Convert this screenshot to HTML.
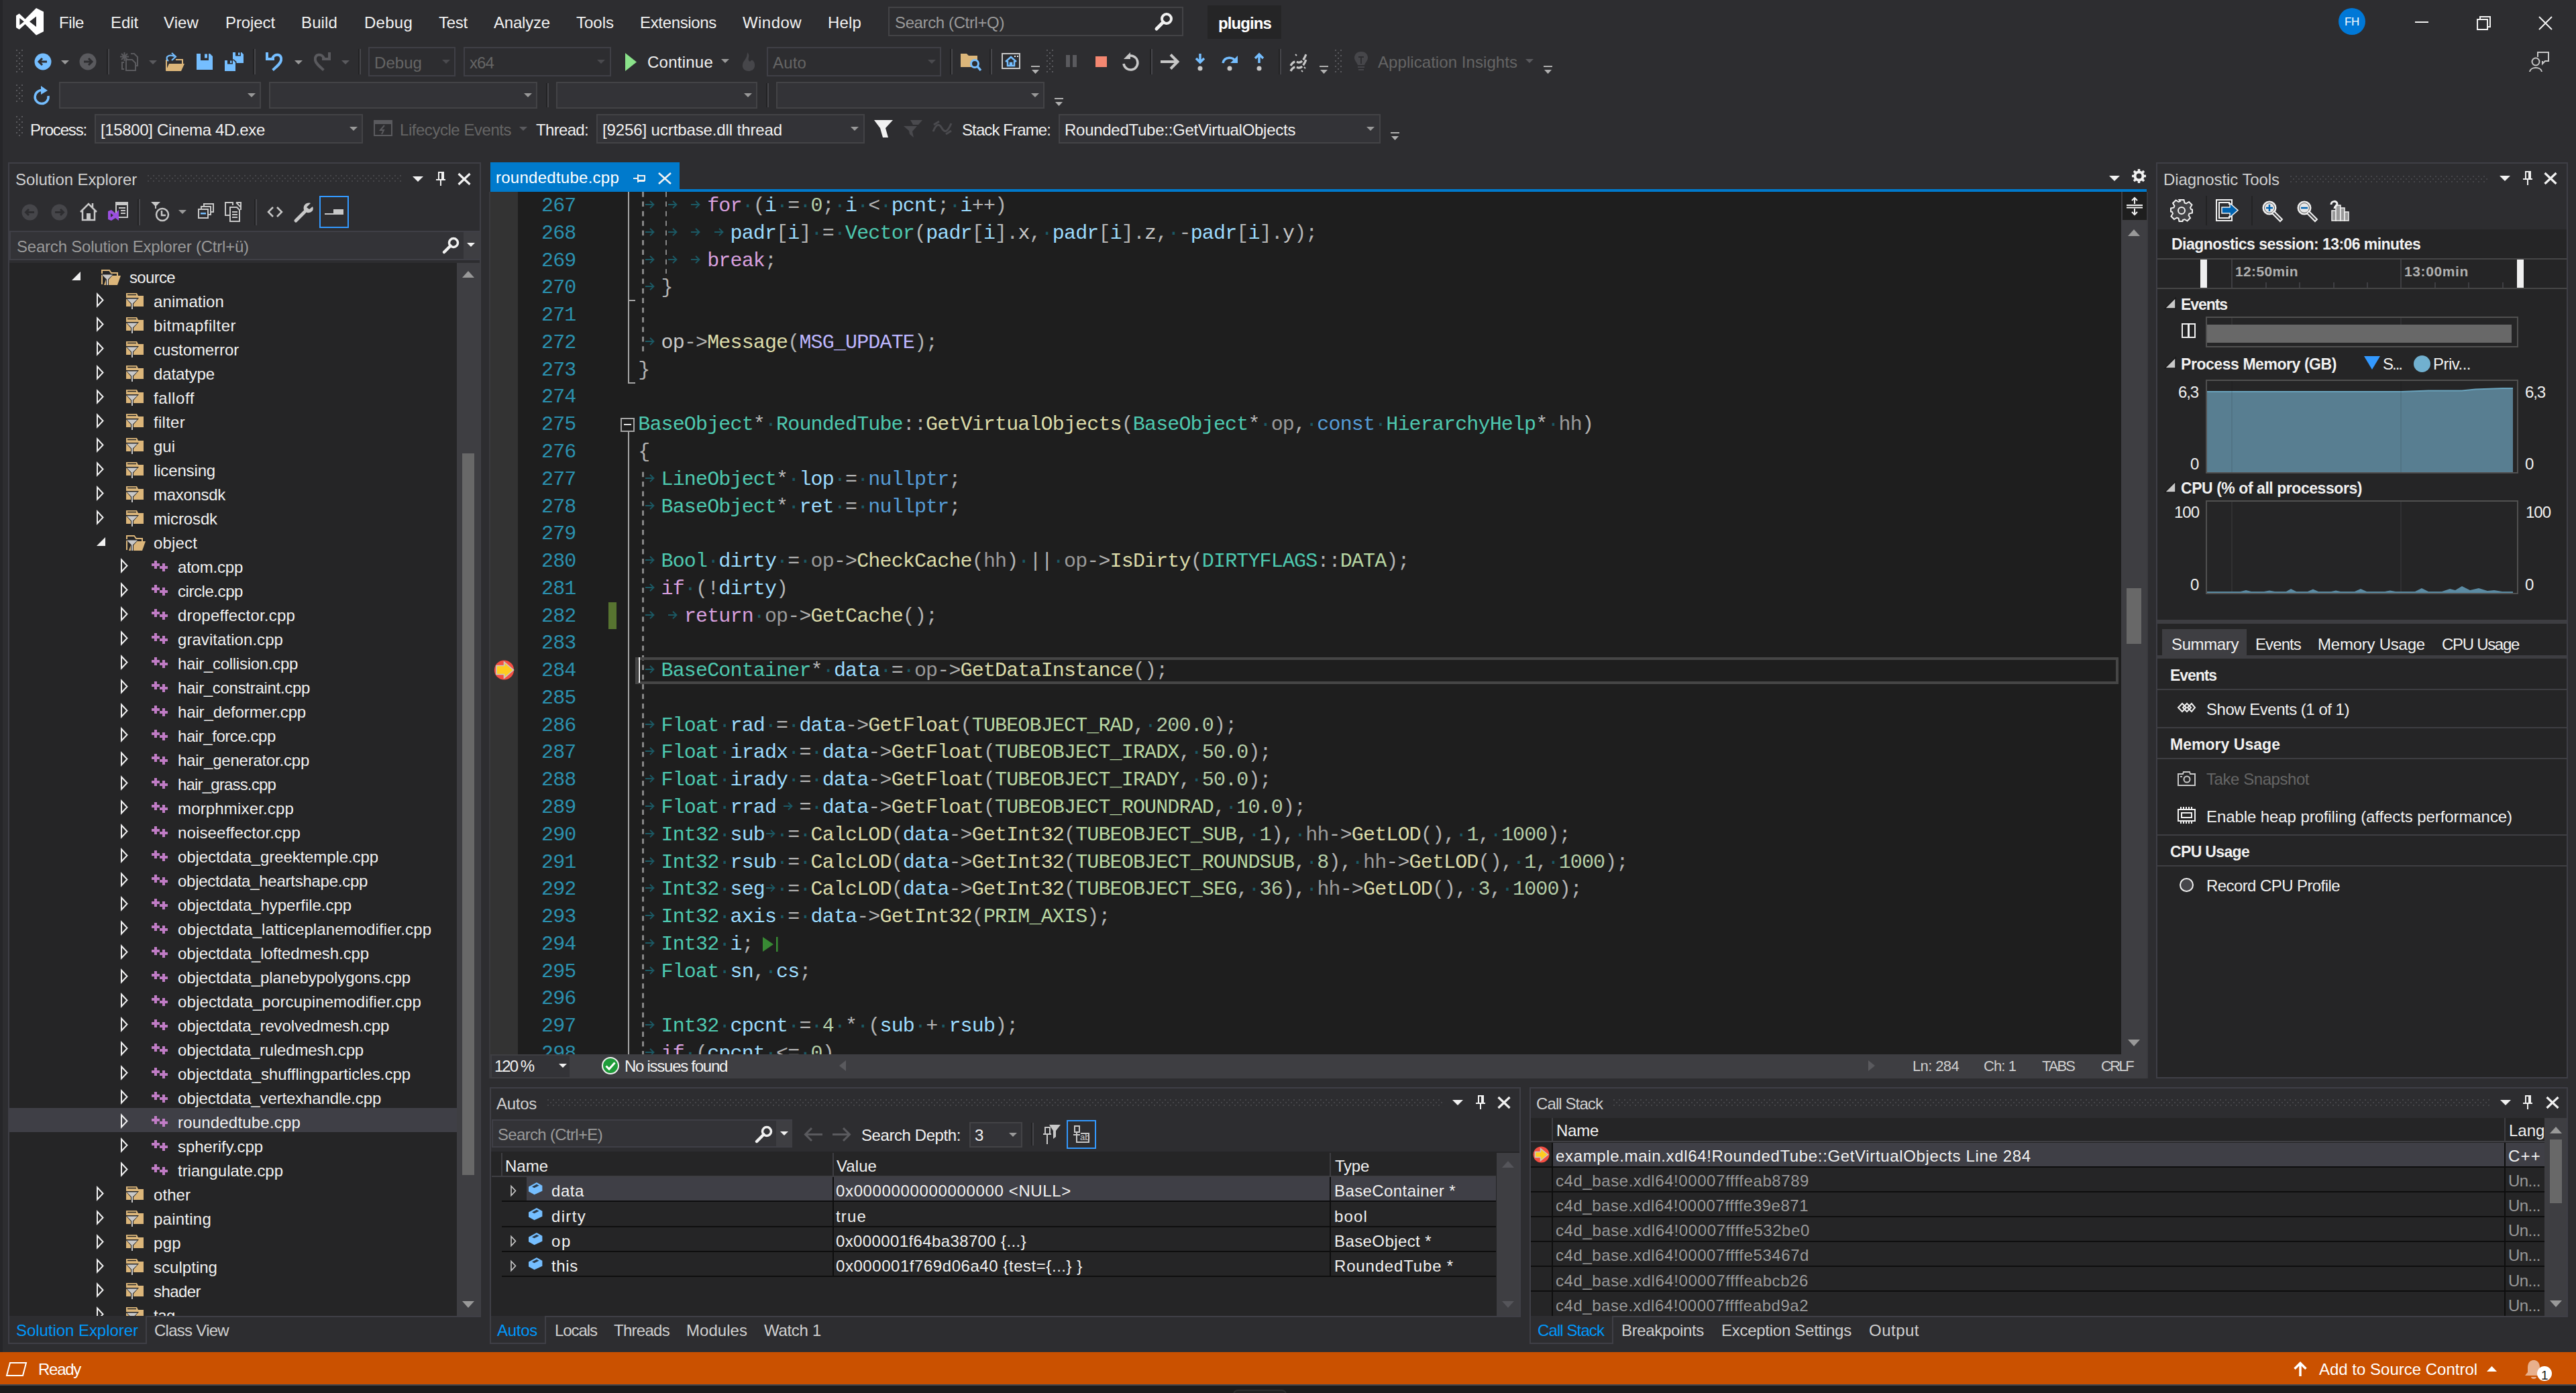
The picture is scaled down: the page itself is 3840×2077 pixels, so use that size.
<!DOCTYPE html><html><head><meta charset="utf-8"><title>VS</title><style>html,body{margin:0;padding:0}body{width:3840px;height:2077px;background:#2d2d30;position:relative;overflow:hidden;font-family:'Liberation Sans',sans-serif;font-size:24px;line-height:1;color:#f1f1f1}
body>*,.a{position:absolute;box-sizing:content-box}span{white-space:pre}svg{overflow:visible}
.c{font-family:'Liberation Mono',monospace;font-size:30px;letter-spacing:-0.85px;color:#c8c8c8}i{font-style:normal}
</style></head><body>
<div style="left:0px;top:0px;width:4px;height:2016px;background:#262629;"></div>
<svg style="left:24px;top:12px;" width="41" height="41" viewBox="0 0 41 41"><path fill="#ffffff" fill-rule="evenodd" d="M30 0L41 5.5V35L30 40.5L13.5 24L4.7 32L0 29V11.3L4.7 8.3L13.5 16.5ZM30 12.5L20 20.2L30 28ZM5.3 15V25.5L11.8 20.2Z"/></svg>
<span style="left:88px;top:22px;letter-spacing:-0.42px;">File</span>
<span style="left:165px;top:22px;letter-spacing:-0.09px;">Edit</span>
<span style="left:244px;top:22px;letter-spacing:0.10px;">View</span>
<span style="left:336px;top:22px;letter-spacing:-0.10px;">Project</span>
<span style="left:449px;top:22px;letter-spacing:0.12px;">Build</span>
<span style="left:543px;top:22px;letter-spacing:0.25px;">Debug</span>
<span style="left:654px;top:22px;letter-spacing:-0.25px;">Test</span>
<span style="left:736px;top:22px;letter-spacing:-0.20px;">Analyze</span>
<span style="left:859px;top:22px;">Tools</span>
<span style="left:954px;top:22px;letter-spacing:-0.34px;">Extensions</span>
<span style="left:1107px;top:22px;letter-spacing:0.44px;">Window</span>
<span style="left:1234px;top:22px;letter-spacing:0.16px;">Help</span>
<div style="left:1324px;top:10px;width:436px;height:40px;background:#2d2d30;border:2px solid #434346;"></div>
<span style="left:1334px;top:22px;color:#999999;letter-spacing:-0.38px;">Search (Ctrl+Q)</span>
<svg style="left:1721px;top:18px;" width="28" height="28" viewBox="0 0 28 28"><circle cx="18" cy="10" r="7" fill="none" stroke="#f1f1f1" stroke-width="4"/><path d="M13 15L3 25" stroke="#f1f1f1" stroke-width="5" stroke-linecap="round"/></svg>
<div style="left:1800px;top:8px;width:110px;height:50px;background:#252526;"></div>
<span style="left:1816px;top:23px;font-weight:700;color:#ffffff;letter-spacing:-0.90px;">plugins</span>
<div style="left:3486px;top:12px;width:40px;height:40px;border-radius:20px;background:#0078d7"></div>
<span style="left:3495px;top:24px;font-size:17px;color:#ffffff;letter-spacing:-0.34px;">FH</span>
<div style="left:3600px;top:32px;width:20px;height:2px;background:#f1f1f1;"></div>
<svg style="left:3692px;top:24px;" width="21" height="21" viewBox="0 0 21 21"><path d="M5 5V1H20V16H16" fill="none" stroke="#f1f1f1" stroke-width="2"/><rect x="1" y="5" width="15" height="15" fill="none" stroke="#f1f1f1" stroke-width="2"/></svg>
<svg style="left:3784px;top:24px;" width="21" height="21" viewBox="0 0 21 21"><path d="M1 1L20 20M20 1L1 20" stroke="#f1f1f1" stroke-width="2"/></svg>
<svg style="left:3770px;top:77px;" width="30" height="30" viewBox="0 0 30 30"><circle cx="10" cy="15" r="5.5" fill="none" stroke="#c8c8c8" stroke-width="2"/><path d="M1 30C2 22 18 22 19 30" fill="none" stroke="#c8c8c8" stroke-width="2"/><path d="M13 8V1H29V14H24L20 18V14" fill="none" stroke="#c8c8c8" stroke-width="2"/></svg>
<svg style="left:24px;top:74px;" width="10" height="36" viewBox="0 0 10 36"><g fill="#5a5a5e"><rect x="0" y="0" width="2" height="2"/><rect x="8" y="0" width="2" height="2"/><rect x="4" y="4" width="2" height="2"/><rect x="0" y="8" width="2" height="2"/><rect x="8" y="8" width="2" height="2"/><rect x="4" y="12" width="2" height="2"/><rect x="0" y="16" width="2" height="2"/><rect x="8" y="16" width="2" height="2"/><rect x="4" y="20" width="2" height="2"/><rect x="0" y="24" width="2" height="2"/><rect x="8" y="24" width="2" height="2"/><rect x="4" y="28" width="2" height="2"/><rect x="0" y="32" width="2" height="2"/><rect x="8" y="32" width="2" height="2"/></g></svg>
<svg style="left:51px;top:79px;" width="26" height="26" viewBox="0 0 26 26"><circle cx="13" cy="13" r="12.5" fill="#75beff"/><path d="M19 13H8M12 8L7 13L12 18" stroke="#2d2d30" stroke-width="3" fill="none"/></svg>
<svg style="left:91px;top:90px;" width="12" height="6" viewBox="0 0 12 6"><path d="M0 0H12L6.0 6Z" fill="#999999"/></svg>
<svg style="left:118px;top:79px;" width="26" height="26" viewBox="0 0 26 26"><circle cx="13" cy="13" r="12.5" fill="#5a5a5e"/><path d="M7 13H18M14 8L19 13L14 18" stroke="#2d2d30" stroke-width="3" fill="none"/></svg>
<div style="left:159px;top:73px;width:2px;height:38px;background:#222224;"></div>
<div style="left:161px;top:73px;width:2px;height:38px;background:#46464a;"></div>
<svg style="left:179px;top:78px;" width="27" height="28" viewBox="0 0 27 28"><path d="M6.5 0V13M0 6.5H13M2 2L11 11M11 2L2 11" stroke="#5a5a5e" stroke-width="2"/><path d="M16 2H21L26 7V20H24" fill="none" stroke="#5a5a5e" stroke-width="2"/><path d="M9 11H18L23 16V27H9Z" fill="#2d2d30" stroke="#5a5a5e" stroke-width="2"/><path d="M6 15H3V25H6" fill="none" stroke="#5a5a5e" stroke-width="2"/></svg>
<svg style="left:222px;top:90px;" width="12" height="6" viewBox="0 0 12 6"><path d="M0 0H12L6.0 6Z" fill="#5a5a5e"/></svg>
<svg style="left:246px;top:78px;" width="30" height="29" viewBox="0 0 30 29"><path d="M2 27V11M16 11H26V17" fill="none" stroke="#dcb67a" stroke-width="2"/><path d="M1 28L6 17H29L24 28Z" fill="#dcb67a"/><path d="M5 13C-1 8 5 2 14 6M10 1L16 6.5L10 12" fill="none" stroke="#75beff" stroke-width="2.2"/></svg>
<svg style="left:293px;top:80px;" width="24" height="24" viewBox="0 0 24 24"><path d="M0 0H20L24 4V24H0Z" fill="#75beff"/><rect x="6" y="0" width="12" height="10" fill="#2d2d30"/><rect x="12" y="0.5" width="4" height="6" fill="#75beff"/></svg>
<svg style="left:335px;top:78px;" width="28" height="28" viewBox="0 0 28 28"><path d="M12 0H25L28 3V16H12Z" fill="#75beff"/><rect x="16" y="0" width="8" height="5.5" fill="#2d2d30"/><rect x="20" y="0.5" width="2.5" height="3.5" fill="#75beff"/><path d="M-1.5 10.5H13.5L17.5 14V29.5H-1.5Z" fill="#2d2d30"/><path d="M0 12H13L16 15V28H0Z" fill="#75beff"/><rect x="4" y="12" width="8" height="5.5" fill="#2d2d30"/><rect x="8" y="12.5" width="2.5" height="3.5" fill="#75beff"/></svg>
<div style="left:377px;top:73px;width:2px;height:38px;background:#222224;"></div>
<div style="left:379px;top:73px;width:2px;height:38px;background:#46464a;"></div>
<svg style="left:396px;top:78px;" width="27" height="29" viewBox="0 0 27 29"><path d="M2 0V10H13" fill="none" stroke="#75beff" stroke-width="4"/><path d="M10 9C13 1 25 2 23 12C22 17 17 21 10.5 26.5" fill="none" stroke="#75beff" stroke-width="4"/></svg>
<svg style="left:439px;top:90px;" width="12" height="6" viewBox="0 0 12 6"><path d="M0 0H12L6.0 6Z" fill="#999999"/></svg>
<svg style="left:466px;top:78px;" width="27" height="29" viewBox="0 0 27 29"><path d="M25 0V10H14" fill="none" stroke="#5a5a5e" stroke-width="4"/><path d="M17 9C14 1 2 2 4 12C5 17 10 21 16.5 26.5" fill="none" stroke="#5a5a5e" stroke-width="4"/></svg>
<svg style="left:509px;top:90px;" width="12" height="6" viewBox="0 0 12 6"><path d="M0 0H12L6.0 6Z" fill="#5a5a5e"/></svg>
<div style="left:534px;top:73px;width:2px;height:38px;background:#222224;"></div>
<div style="left:536px;top:73px;width:2px;height:38px;background:#46464a;"></div>
<div style="left:549px;top:70px;width:126px;height:40px;background:#2d2d30;border:2px solid #3f3f46;"></div>
<svg style="left:659px;top:89px;" width="12" height="6" viewBox="0 0 12 6"><path d="M0 0H12L6.0 6Z" fill="#4a4a4e"/></svg>
<span style="left:558px;top:82px;color:#656565;letter-spacing:0.05px;">Debug</span>
<div style="left:691px;top:70px;width:216px;height:40px;background:#2d2d30;border:2px solid #3f3f46;"></div>
<svg style="left:890px;top:89px;" width="12" height="6" viewBox="0 0 12 6"><path d="M0 0H12L6.0 6Z" fill="#4a4a4e"/></svg>
<span style="left:700px;top:82px;color:#656565;letter-spacing:-0.90px;">x64</span>
<svg style="left:932px;top:79px;" width="17" height="27" viewBox="0 0 17 27"><path d="M0 0L17 13.5L0 27Z" fill="#8ae28a"/></svg>
<span style="left:965px;top:81px;letter-spacing:0.24px;">Continue</span>
<svg style="left:1075px;top:88px;" width="12" height="6" viewBox="0 0 12 6"><path d="M0 0H12L6.0 6Z" fill="#999999"/></svg>
<svg style="left:1106px;top:78px;" width="20" height="28" viewBox="0 0 20 28"><path d="M8 0C14 6 6 10 12 14C16 8 20 16 19 21C18 26 14 28 10 28C4 28 0 24 1 18C2 12 8 10 8 0Z" fill="#46464a"/></svg>
<div style="left:1143px;top:70px;width:256px;height:40px;background:#2d2d30;border:2px solid #3f3f46;"></div>
<svg style="left:1383px;top:89px;" width="12" height="6" viewBox="0 0 12 6"><path d="M0 0H12L6.0 6Z" fill="#4a4a4e"/></svg>
<span style="left:1152px;top:82px;color:#656565;letter-spacing:0.16px;">Auto</span>
<div style="left:1416px;top:73px;width:2px;height:38px;background:#222224;"></div>
<div style="left:1418px;top:73px;width:2px;height:38px;background:#46464a;"></div>
<svg style="left:1432px;top:78px;" width="31" height="28" viewBox="0 0 31 28"><path d="M0 22V2H9L12 5H25V22Z" fill="#dcb67a"/><circle cx="21" cy="17" r="5.5" fill="#2d2d30" stroke="#75beff" stroke-width="3"/><path d="M25 21L30 27" stroke="#75beff" stroke-width="3.5"/></svg>
<div style="left:1475px;top:73px;width:2px;height:38px;background:#222224;"></div>
<div style="left:1477px;top:73px;width:2px;height:38px;background:#46464a;"></div>
<svg style="left:1493px;top:79px;" width="28" height="26" viewBox="0 0 28 26"><rect x="1" y="1" width="26" height="22" fill="none" stroke="#c8c8c8" stroke-width="2"/><path d="M6 13L14 6L22 13M9 12V19H19V12M13 19V15H15V19" fill="none" stroke="#75beff" stroke-width="2.5"/><rect x="19" y="4" width="2" height="2" fill="#f1f1f1"/><rect x="23" y="4" width="2" height="2" fill="#f1f1f1"/></svg>
<svg style="left:1537px;top:98px;" width="13" height="13" viewBox="0 0 13 13"><path d="M0 0H13V2H0ZM1 6H12L6.5 12Z" fill="#b0b0b0"/></svg>
<svg style="left:1560px;top:74px;" width="10" height="36" viewBox="0 0 10 36"><g fill="#5a5a5e"><rect x="0" y="0" width="2" height="2"/><rect x="8" y="0" width="2" height="2"/><rect x="4" y="4" width="2" height="2"/><rect x="0" y="8" width="2" height="2"/><rect x="8" y="8" width="2" height="2"/><rect x="4" y="12" width="2" height="2"/><rect x="0" y="16" width="2" height="2"/><rect x="8" y="16" width="2" height="2"/><rect x="4" y="20" width="2" height="2"/><rect x="0" y="24" width="2" height="2"/><rect x="8" y="24" width="2" height="2"/><rect x="4" y="28" width="2" height="2"/><rect x="0" y="32" width="2" height="2"/><rect x="8" y="32" width="2" height="2"/></g></svg>
<div style="left:1589px;top:82px;width:6px;height:18px;background:#5a5a5e;"></div>
<div style="left:1599px;top:82px;width:6px;height:18px;background:#5a5a5e;"></div>
<div style="left:1633px;top:84px;width:17px;height:16px;background:#f48771;"></div>
<svg style="left:1672px;top:78px;" width="26" height="28" viewBox="0 0 26 28"><path d="M9 6A10.5 10.5 0 1 1 3 17" fill="none" stroke="#c8c8c8" stroke-width="3.5"/><path d="M13 0V10H3Z" fill="#c8c8c8"/></svg>
<div style="left:1714px;top:73px;width:2px;height:38px;background:#222224;"></div>
<div style="left:1716px;top:73px;width:2px;height:38px;background:#46464a;"></div>
<svg style="left:1730px;top:80px;" width="29" height="24" viewBox="0 0 29 24"><path d="M0 12H25M15 1.5L25.5 12L15 22.5" fill="none" stroke="#c8c8c8" stroke-width="4"/></svg>
<svg style="left:1782px;top:80px;" width="14" height="26" viewBox="0 0 14 26"><path d="M7 0V12M1 7L7 13L13 7" fill="none" stroke="#75beff" stroke-width="3.5"/><circle cx="7" cy="22" r="3.5" fill="#c8c8c8"/></svg>
<svg style="left:1821px;top:80px;" width="25" height="26" viewBox="0 0 25 26"><path d="M2 14C4 4 18 4 21 12" fill="none" stroke="#75beff" stroke-width="3.5"/><path d="M24 3V14H13Z" fill="#75beff"/><circle cx="12" cy="22" r="3.5" fill="#c8c8c8"/></svg>
<svg style="left:1870px;top:80px;" width="14" height="26" viewBox="0 0 14 26"><path d="M7 14V2M1 7L7 1L13 7" fill="none" stroke="#75beff" stroke-width="3.5"/><circle cx="7" cy="22" r="3.5" fill="#c8c8c8"/></svg>
<div style="left:1906px;top:73px;width:2px;height:38px;background:#222224;"></div>
<div style="left:1908px;top:73px;width:2px;height:38px;background:#46464a;"></div>
<svg style="left:1922px;top:78px;" width="28" height="28" viewBox="0 0 28 28"><path d="M2 20C6 12 10 14 13 15C17 16 21 13 25 3M2 28C6 20 10 22 13 23C17 24 21 21 25 11" fill="none" stroke="#c8c8c8" stroke-width="3.2" stroke-dasharray="9 2.5"/><path d="M9 3L11 5M5 14L7 16M22 22L24 24M18 27L20 29" stroke="#c8c8c8" stroke-width="2"/></svg>
<svg style="left:1967px;top:98px;" width="13" height="13" viewBox="0 0 13 13"><path d="M0 0H13V2H0ZM1 6H12L6.5 12Z" fill="#b0b0b0"/></svg>
<svg style="left:1990px;top:74px;" width="10" height="36" viewBox="0 0 10 36"><g fill="#5a5a5e"><rect x="0" y="0" width="2" height="2"/><rect x="8" y="0" width="2" height="2"/><rect x="4" y="4" width="2" height="2"/><rect x="0" y="8" width="2" height="2"/><rect x="8" y="8" width="2" height="2"/><rect x="4" y="12" width="2" height="2"/><rect x="0" y="16" width="2" height="2"/><rect x="8" y="16" width="2" height="2"/><rect x="4" y="20" width="2" height="2"/><rect x="0" y="24" width="2" height="2"/><rect x="8" y="24" width="2" height="2"/><rect x="4" y="28" width="2" height="2"/><rect x="0" y="32" width="2" height="2"/><rect x="8" y="32" width="2" height="2"/></g></svg>
<svg style="left:2019px;top:77px;" width="20" height="30" viewBox="0 0 20 30"><path d="M10 0C3 0 0 5 0 9C0 13 3 15 5 20H15C17 15 20 13 20 9C20 5 17 0 10 0Z" fill="#46464a"/><rect x="5" y="22" width="10" height="2" fill="#46464a"/><rect x="6" y="26" width="8" height="2" fill="#46464a"/><path d="M6 8H14M10 8V18" stroke="#2d2d30" stroke-width="2"/></svg>
<span style="left:2054px;top:81px;color:#656565;letter-spacing:0.06px;">Application Insights</span>
<svg style="left:2274px;top:88px;" width="12" height="6" viewBox="0 0 12 6"><path d="M0 0H12L6.0 6Z" fill="#5a5a5e"/></svg>
<svg style="left:2301px;top:98px;" width="13" height="13" viewBox="0 0 13 13"><path d="M0 0H13V2H0ZM1 6H12L6.5 12Z" fill="#b0b0b0"/></svg>
<svg style="left:24px;top:126px;" width="10" height="30" viewBox="0 0 10 30"><g fill="#5a5a5e"><rect x="0" y="0" width="2" height="2"/><rect x="8" y="0" width="2" height="2"/><rect x="4" y="4" width="2" height="2"/><rect x="0" y="8" width="2" height="2"/><rect x="8" y="8" width="2" height="2"/><rect x="4" y="12" width="2" height="2"/><rect x="0" y="16" width="2" height="2"/><rect x="8" y="16" width="2" height="2"/><rect x="4" y="20" width="2" height="2"/><rect x="0" y="24" width="2" height="2"/><rect x="8" y="24" width="2" height="2"/></g></svg>
<svg style="left:48px;top:128px;" width="27" height="28" viewBox="0 0 27 28"><path d="M17 7A10 10 0 1 0 24 15" fill="none" stroke="#75beff" stroke-width="3.5"/><path d="M13 0L23 7L13 13Z" fill="#75beff"/></svg>
<div style="left:88px;top:122px;width:297px;height:36px;background:#333337;border:2px solid #434346;"></div>
<svg style="left:369px;top:139px;" width="12" height="6" viewBox="0 0 12 6"><path d="M0 0H12L6.0 6Z" fill="#999999"/></svg>
<div style="left:401px;top:122px;width:396px;height:36px;background:#333337;border:2px solid #434346;"></div>
<svg style="left:781px;top:139px;" width="12" height="6" viewBox="0 0 12 6"><path d="M0 0H12L6.0 6Z" fill="#999999"/></svg>
<div style="left:814px;top:124px;width:2px;height:36px;background:#222224;"></div>
<div style="left:816px;top:124px;width:2px;height:36px;background:#46464a;"></div>
<div style="left:829px;top:122px;width:296px;height:36px;background:#333337;border:2px solid #434346;"></div>
<svg style="left:1109px;top:139px;" width="12" height="6" viewBox="0 0 12 6"><path d="M0 0H12L6.0 6Z" fill="#999999"/></svg>
<div style="left:1142px;top:124px;width:2px;height:36px;background:#222224;"></div>
<div style="left:1144px;top:124px;width:2px;height:36px;background:#46464a;"></div>
<div style="left:1157px;top:122px;width:396px;height:36px;background:#333337;border:2px solid #434346;"></div>
<svg style="left:1537px;top:139px;" width="12" height="6" viewBox="0 0 12 6"><path d="M0 0H12L6.0 6Z" fill="#999999"/></svg>
<svg style="left:1572px;top:146px;" width="13" height="13" viewBox="0 0 13 13"><path d="M0 0H13V2H0ZM1 6H12L6.5 12Z" fill="#b0b0b0"/></svg>
<svg style="left:24px;top:173px;" width="10" height="34" viewBox="0 0 10 34"><g fill="#5a5a5e"><rect x="0" y="0" width="2" height="2"/><rect x="8" y="0" width="2" height="2"/><rect x="4" y="4" width="2" height="2"/><rect x="0" y="8" width="2" height="2"/><rect x="8" y="8" width="2" height="2"/><rect x="4" y="12" width="2" height="2"/><rect x="0" y="16" width="2" height="2"/><rect x="8" y="16" width="2" height="2"/><rect x="4" y="20" width="2" height="2"/><rect x="0" y="24" width="2" height="2"/><rect x="8" y="24" width="2" height="2"/><rect x="4" y="28" width="2" height="2"/></g></svg>
<span style="left:45px;top:182px;letter-spacing:-1.17px;">Process:</span>
<div style="left:141px;top:170px;width:396px;height:40px;background:#333337;border:2px solid #434346;"></div>
<svg style="left:521px;top:189px;" width="12" height="6" viewBox="0 0 12 6"><path d="M0 0H12L6.0 6Z" fill="#999999"/></svg>
<span style="left:150px;top:182px;letter-spacing:-0.34px;">[15800] Cinema 4D.exe</span>
<svg style="left:557px;top:179px;" width="28" height="24" viewBox="0 0 28 24"><rect x="1" y="1" width="26" height="22" fill="none" stroke="#5a5a5e" stroke-width="2"/><rect x="1" y="1" width="26" height="5" fill="#5a5a5e"/><path d="M16 8L10 15H15L12 21" fill="none" stroke="#5a5a5e" stroke-width="2"/></svg>
<span style="left:596px;top:182px;color:#656565;letter-spacing:-0.46px;">Lifecycle Events</span>
<svg style="left:774px;top:189px;" width="12" height="6" viewBox="0 0 12 6"><path d="M0 0H12L6.0 6Z" fill="#5a5a5e"/></svg>
<span style="left:799px;top:182px;letter-spacing:-0.67px;">Thread:</span>
<div style="left:889px;top:170px;width:396px;height:40px;background:#333337;border:2px solid #434346;"></div>
<svg style="left:1268px;top:189px;" width="12" height="6" viewBox="0 0 12 6"><path d="M0 0H12L6.0 6Z" fill="#999999"/></svg>
<span style="left:898px;top:182px;letter-spacing:-0.11px;">[9256] ucrtbase.dll thread</span>
<svg style="left:1303px;top:178px;" width="29" height="28" viewBox="0 0 29 28"><path d="M0 1H28L17 13L21 27L13 27L9 13Z" fill="#f1f1f1"/></svg>
<svg style="left:1347px;top:178px;" width="29" height="28" viewBox="0 0 29 28"><path d="M10 1H28L22 8H14ZM0 10H20L13 18L15 27L9 22L8 17Z" fill="#4a4a4e"/></svg>
<svg style="left:1390px;top:180px;" width="30" height="22" viewBox="0 0 30 22"><path d="M1 16C6 4 10 4 14 11C18 18 22 18 28 4" fill="none" stroke="#4a4a4e" stroke-width="3"/><path d="M2 6L10 1M20 20L28 15" stroke="#4a4a4e" stroke-width="3"/></svg>
<span style="left:1434px;top:182px;letter-spacing:-0.89px;">Stack Frame:</span>
<div style="left:1578px;top:170px;width:476px;height:40px;background:#333337;border:2px solid #434346;"></div>
<svg style="left:2037px;top:189px;" width="12" height="6" viewBox="0 0 12 6"><path d="M0 0H12L6.0 6Z" fill="#999999"/></svg>
<span style="left:1587px;top:182px;letter-spacing:-0.27px;">RoundedTube::GetVirtualObjects</span>
<svg style="left:2073px;top:197px;" width="13" height="13" viewBox="0 0 13 13"><path d="M0 0H13V2H0ZM1 6H12L6.5 12Z" fill="#b0b0b0"/></svg>
<div style="left:12px;top:242px;width:705px;height:1722px;background:#3f3f46;"></div>
<div style="left:14px;top:244px;width:701px;height:100px;background:#2d2d30;"></div>
<span style="left:23px;top:256px;color:#d0d0d0;letter-spacing:-0.10px;">Solution Explorer</span>
<svg style="left:220px;top:261px" width="378" height="10"><defs><pattern id="g220261" width="8" height="8" patternUnits="userSpaceOnUse"><rect x="0" y="0" width="2" height="2" fill="#46464a"/><rect x="4" y="4" width="2" height="2" fill="#46464a"/></pattern></defs><rect width="378" height="10" fill="url(#g220261)"/></svg>
<svg style="left:615px;top:263px;" width="16" height="8" viewBox="0 0 16 8"><path d="M0 0H16L8 8Z" fill="#f1f1f1"/></svg>
<svg style="left:650px;top:256px;" width="14" height="22" viewBox="0 0 14 22"><path d="M3 1H11V12M4 1V12M0 12H14M7 12V21" fill="none" stroke="#f1f1f1" stroke-width="2"/><rect x="8" y="1" width="3" height="11" fill="#f1f1f1"/></svg>
<svg style="left:682px;top:259px;" width="20" height="16" viewBox="0 0 20 16"><path d="M1.5 0L18.5 16M18.5 0L1.5 16" stroke="#f1f1f1" stroke-width="3.2"/></svg>
<svg style="left:32px;top:304px;" width="25" height="25" viewBox="0 0 25 25"><circle cx="12.5" cy="12.5" r="12" fill="#46464a"/><path d="M19 12.5H7M11 8L6.5 12.5L11 17" stroke="#2d2d30" stroke-width="3" fill="none"/></svg>
<svg style="left:76px;top:304px;" width="25" height="25" viewBox="0 0 25 25"><circle cx="12.5" cy="12.5" r="12" fill="#46464a"/><path d="M6 12.5H18M14 8L18.5 12.5L14 17" stroke="#2d2d30" stroke-width="3" fill="none"/></svg>
<svg style="left:118px;top:301px;" width="28" height="29" viewBox="0 0 28 29"><path d="M2 15L14 3L26 15M5 13V27H23V13M20 8V2" fill="none" stroke="#c8c8c8" stroke-width="2.5"/><rect x="11" y="17" width="6" height="10" fill="#c8c8c8"/></svg>
<svg style="left:161px;top:301px;" width="30" height="30" viewBox="0 0 30 30"><rect x="12" y="1" width="17" height="22" fill="none" stroke="#c8c8c8" stroke-width="2"/><rect x="12" y="1" width="17" height="4" fill="#c8c8c8"/><path d="M16 9H26M19 13H26M19 17H26" stroke="#c8c8c8" stroke-width="2"/><path d="M0 14L5 12L11 17L16 12V28L11 24L5 28L0 26Z" fill="#9b4fe0"/><path d="M4 17V23L8 20Z" fill="#2d2d30"/></svg>
<div style="left:205px;top:297px;width:2px;height:39px;background:#222224;"></div>
<div style="left:207px;top:297px;width:2px;height:39px;background:#46464a;"></div>
<svg style="left:225px;top:301px;" width="28" height="30" viewBox="0 0 28 30"><path d="M0 0H14L7 7Z" fill="#c8c8c8"/><rect x="6" y="6" width="2" height="4" fill="#c8c8c8"/><circle cx="17" cy="19" r="9" fill="none" stroke="#c8c8c8" stroke-width="2.5"/><path d="M16 13V20H22" fill="none" stroke="#c8c8c8" stroke-width="2.5"/></svg>
<svg style="left:266px;top:313px;" width="12" height="6" viewBox="0 0 12 6"><path d="M0 0H12L6.0 6Z" fill="#999999"/></svg>
<svg style="left:295px;top:303px;" width="24" height="24" viewBox="0 0 24 24"><path d="M9 5V1H23V13H19M5 9V5H19V17H15" fill="none" stroke="#c8c8c8" stroke-width="2"/><rect x="1" y="9" width="14" height="13" fill="none" stroke="#c8c8c8" stroke-width="2"/><rect x="4" y="14" width="8" height="2.5" fill="#75beff"/></svg>
<svg style="left:335px;top:301px;" width="30" height="30" viewBox="0 0 30 30"><path d="M7 20H1V1H12V5M24 12V1H17M17 1L24 8" fill="none" stroke="#c8c8c8" stroke-width="2"/><path d="M8 8H18L22 12V29H8Z" fill="none" stroke="#c8c8c8" stroke-width="2"/><path d="M11 15H19M11 19H19M11 23H19" stroke="#c8c8c8" stroke-width="2"/></svg>
<div style="left:379px;top:297px;width:2px;height:39px;background:#222224;"></div>
<div style="left:381px;top:297px;width:2px;height:39px;background:#46464a;"></div>
<svg style="left:398px;top:308px;" width="24" height="16" viewBox="0 0 24 16"><path d="M9 1L2 8L9 15M15 1L22 8L15 15" fill="none" stroke="#c8c8c8" stroke-width="2.5"/></svg>
<svg style="left:439px;top:301px;" width="30" height="30" viewBox="0 0 30 30"><path d="M2 28L15 15" stroke="#c8c8c8" stroke-width="5" stroke-linecap="round"/><path d="M24 2C18 0 12 5 14 12C16 17 23 18 27 13C28 11 28 9 27 7L22 11L18 8L23 3Z" fill="#c8c8c8"/></svg>
<div style="left:476px;top:292px;width:40px;height:44px;background:#2d2d30;border:2px solid #3399ff;"></div>
<svg style="left:484px;top:312px;" width="28" height="10" viewBox="0 0 28 10"><rect x="13" y="0" width="15" height="7" fill="#c8c8c8"/><rect x="0" y="6" width="28" height="2" fill="#c8c8c8"/></svg>
<div style="left:14px;top:344px;width:702px;height:44px;background:#3f3f46;"></div>
<div style="left:16px;top:346px;width:675px;height:40px;background:#333337;"></div>
<div style="left:691px;top:346px;width:24px;height:40px;background:#3e3e42;"></div>
<span style="left:25px;top:356px;color:#999999;letter-spacing:-0.21px;">Search Solution Explorer (Ctrl+ü)</span>
<svg style="left:659px;top:353px;" width="26" height="26" viewBox="0 0 26 26"><circle cx="17" cy="9" r="6.5" fill="none" stroke="#f1f1f1" stroke-width="3.5"/><path d="M12.5 13.5L3 23" stroke="#f1f1f1" stroke-width="4.5" stroke-linecap="round"/></svg>
<svg style="left:696px;top:362px;" width="12" height="6" viewBox="0 0 12 6"><path d="M0 0H12L6.0 6Z" fill="#f1f1f1"/></svg>
<div style="left:14px;top:388px;width:701px;height:4px;background:#2d2d30;"></div>
<div style="left:14px;top:392px;width:667px;height:1570px;background:#252526;"></div>
<div style="left:681px;top:392px;width:35px;height:1570px;background:#3e3e42;"></div>
<div style="left:689px;top:676px;width:18px;height:1076px;background:#686868;"></div>
<svg style="left:689px;top:404px;" width="18" height="10" viewBox="0 0 18 10"><path d="M0 10H18L9 0Z" fill="#999999"/></svg>
<svg style="left:689px;top:1940px;" width="18" height="10" viewBox="0 0 18 10"><path d="M0 0H18L9 10Z" fill="#999999"/></svg>
<div style="left:14px;top:392px;width:667px;height:1570px;overflow:hidden">
<svg class="a" style="left:93px;top:13px;" width="14" height="14" viewBox="0 0 14 14"><path d="M13 0V13H0Z" fill="#f1f1f1"/></svg>
<svg class="a" style="left:137px;top:8px;" width="30" height="26" viewBox="0 0 30 26"><path d="M1 24V3H12L15 7H24V11" fill="none" stroke="#dcb67a" stroke-width="2"/><path d="M4 25L9 11H29L24 25Z" fill="#dcb67a"/><path d="M-1 8H19L11 17V26H7V17Z" fill="#252526"/><path d="M1 9.5H17L10 16.5V25H8V16.5Z" fill="#c8c8c8"/></svg>
<span class="a" style="left:179px;top:10px;letter-spacing:-0.67px;">source</span>
<svg class="a" style="left:130px;top:45px;" width="11" height="21" viewBox="0 0 11 21"><path d="M1 1.5L9.5 10.5L1 19.5Z" fill="none" stroke="#f1f1f1" stroke-width="2"/></svg>
<svg class="a" style="left:174px;top:44px;" width="30" height="26" viewBox="0 0 30 26"><path d="M0 21V1H16L18 5H26V21Z" fill="#dcb67a"/><path d="M2 3.5H15" stroke="#252526" stroke-width="1.5"/><path d="M-1 8H19L11 17V26H7V17Z" fill="#252526"/><path d="M1 9.5H17L10 16.5V25H8V16.5Z" fill="#c8c8c8"/></svg>
<span class="a" style="left:215px;top:46px;letter-spacing:0.10px;">animation</span>
<svg class="a" style="left:130px;top:81px;" width="11" height="21" viewBox="0 0 11 21"><path d="M1 1.5L9.5 10.5L1 19.5Z" fill="none" stroke="#f1f1f1" stroke-width="2"/></svg>
<svg class="a" style="left:174px;top:80px;" width="30" height="26" viewBox="0 0 30 26"><path d="M0 21V1H16L18 5H26V21Z" fill="#dcb67a"/><path d="M2 3.5H15" stroke="#252526" stroke-width="1.5"/><path d="M-1 8H19L11 17V26H7V17Z" fill="#252526"/><path d="M1 9.5H17L10 16.5V25H8V16.5Z" fill="#c8c8c8"/></svg>
<span class="a" style="left:215px;top:82px;letter-spacing:0.47px;">bitmapfilter</span>
<svg class="a" style="left:130px;top:117px;" width="11" height="21" viewBox="0 0 11 21"><path d="M1 1.5L9.5 10.5L1 19.5Z" fill="none" stroke="#f1f1f1" stroke-width="2"/></svg>
<svg class="a" style="left:174px;top:116px;" width="30" height="26" viewBox="0 0 30 26"><path d="M0 21V1H16L18 5H26V21Z" fill="#dcb67a"/><path d="M2 3.5H15" stroke="#252526" stroke-width="1.5"/><path d="M-1 8H19L11 17V26H7V17Z" fill="#252526"/><path d="M1 9.5H17L10 16.5V25H8V16.5Z" fill="#c8c8c8"/></svg>
<span class="a" style="left:215px;top:118px;letter-spacing:-0.09px;">customerror</span>
<svg class="a" style="left:130px;top:153px;" width="11" height="21" viewBox="0 0 11 21"><path d="M1 1.5L9.5 10.5L1 19.5Z" fill="none" stroke="#f1f1f1" stroke-width="2"/></svg>
<svg class="a" style="left:174px;top:152px;" width="30" height="26" viewBox="0 0 30 26"><path d="M0 21V1H16L18 5H26V21Z" fill="#dcb67a"/><path d="M2 3.5H15" stroke="#252526" stroke-width="1.5"/><path d="M-1 8H19L11 17V26H7V17Z" fill="#252526"/><path d="M1 9.5H17L10 16.5V25H8V16.5Z" fill="#c8c8c8"/></svg>
<span class="a" style="left:215px;top:154px;letter-spacing:-0.13px;">datatype</span>
<svg class="a" style="left:130px;top:189px;" width="11" height="21" viewBox="0 0 11 21"><path d="M1 1.5L9.5 10.5L1 19.5Z" fill="none" stroke="#f1f1f1" stroke-width="2"/></svg>
<svg class="a" style="left:174px;top:188px;" width="30" height="26" viewBox="0 0 30 26"><path d="M0 21V1H16L18 5H26V21Z" fill="#dcb67a"/><path d="M2 3.5H15" stroke="#252526" stroke-width="1.5"/><path d="M-1 8H19L11 17V26H7V17Z" fill="#252526"/><path d="M1 9.5H17L10 16.5V25H8V16.5Z" fill="#c8c8c8"/></svg>
<span class="a" style="left:215px;top:190px;letter-spacing:0.58px;">falloff</span>
<svg class="a" style="left:130px;top:225px;" width="11" height="21" viewBox="0 0 11 21"><path d="M1 1.5L9.5 10.5L1 19.5Z" fill="none" stroke="#f1f1f1" stroke-width="2"/></svg>
<svg class="a" style="left:174px;top:224px;" width="30" height="26" viewBox="0 0 30 26"><path d="M0 21V1H16L18 5H26V21Z" fill="#dcb67a"/><path d="M2 3.5H15" stroke="#252526" stroke-width="1.5"/><path d="M-1 8H19L11 17V26H7V17Z" fill="#252526"/><path d="M1 9.5H17L10 16.5V25H8V16.5Z" fill="#c8c8c8"/></svg>
<span class="a" style="left:215px;top:226px;letter-spacing:0.28px;">filter</span>
<svg class="a" style="left:130px;top:261px;" width="11" height="21" viewBox="0 0 11 21"><path d="M1 1.5L9.5 10.5L1 19.5Z" fill="none" stroke="#f1f1f1" stroke-width="2"/></svg>
<svg class="a" style="left:174px;top:260px;" width="30" height="26" viewBox="0 0 30 26"><path d="M0 21V1H16L18 5H26V21Z" fill="#dcb67a"/><path d="M2 3.5H15" stroke="#252526" stroke-width="1.5"/><path d="M-1 8H19L11 17V26H7V17Z" fill="#252526"/><path d="M1 9.5H17L10 16.5V25H8V16.5Z" fill="#c8c8c8"/></svg>
<span class="a" style="left:215px;top:262px;">gui</span>
<svg class="a" style="left:130px;top:297px;" width="11" height="21" viewBox="0 0 11 21"><path d="M1 1.5L9.5 10.5L1 19.5Z" fill="none" stroke="#f1f1f1" stroke-width="2"/></svg>
<svg class="a" style="left:174px;top:296px;" width="30" height="26" viewBox="0 0 30 26"><path d="M0 21V1H16L18 5H26V21Z" fill="#dcb67a"/><path d="M2 3.5H15" stroke="#252526" stroke-width="1.5"/><path d="M-1 8H19L11 17V26H7V17Z" fill="#252526"/><path d="M1 9.5H17L10 16.5V25H8V16.5Z" fill="#c8c8c8"/></svg>
<span class="a" style="left:215px;top:298px;letter-spacing:-0.15px;">licensing</span>
<svg class="a" style="left:130px;top:333px;" width="11" height="21" viewBox="0 0 11 21"><path d="M1 1.5L9.5 10.5L1 19.5Z" fill="none" stroke="#f1f1f1" stroke-width="2"/></svg>
<svg class="a" style="left:174px;top:332px;" width="30" height="26" viewBox="0 0 30 26"><path d="M0 21V1H16L18 5H26V21Z" fill="#dcb67a"/><path d="M2 3.5H15" stroke="#252526" stroke-width="1.5"/><path d="M-1 8H19L11 17V26H7V17Z" fill="#252526"/><path d="M1 9.5H17L10 16.5V25H8V16.5Z" fill="#c8c8c8"/></svg>
<span class="a" style="left:215px;top:334px;letter-spacing:-0.30px;">maxonsdk</span>
<svg class="a" style="left:130px;top:369px;" width="11" height="21" viewBox="0 0 11 21"><path d="M1 1.5L9.5 10.5L1 19.5Z" fill="none" stroke="#f1f1f1" stroke-width="2"/></svg>
<svg class="a" style="left:174px;top:368px;" width="30" height="26" viewBox="0 0 30 26"><path d="M0 21V1H16L18 5H26V21Z" fill="#dcb67a"/><path d="M2 3.5H15" stroke="#252526" stroke-width="1.5"/><path d="M-1 8H19L11 17V26H7V17Z" fill="#252526"/><path d="M1 9.5H17L10 16.5V25H8V16.5Z" fill="#c8c8c8"/></svg>
<span class="a" style="left:215px;top:370px;letter-spacing:-0.13px;">microsdk</span>
<svg class="a" style="left:130px;top:409px;" width="14" height="14" viewBox="0 0 14 14"><path d="M13 0V13H0Z" fill="#f1f1f1"/></svg>
<svg class="a" style="left:174px;top:404px;" width="30" height="26" viewBox="0 0 30 26"><path d="M1 24V3H12L15 7H24V11" fill="none" stroke="#dcb67a" stroke-width="2"/><path d="M4 25L9 11H29L24 25Z" fill="#dcb67a"/><path d="M-1 8H19L11 17V26H7V17Z" fill="#252526"/><path d="M1 9.5H17L10 16.5V25H8V16.5Z" fill="#c8c8c8"/></svg>
<span class="a" style="left:215px;top:406px;letter-spacing:0.16px;">object</span>
<svg class="a" style="left:166px;top:441px;" width="11" height="21" viewBox="0 0 11 21"><path d="M1 1.5L9.5 10.5L1 19.5Z" fill="none" stroke="#f1f1f1" stroke-width="2"/></svg>
<svg class="a" style="left:212px;top:444px;" width="24" height="17" viewBox="0 0 24 17"><path d="M4 0H8V4H12V8H8V12H4V8H0V4H4Z" fill="#c07cc5"/><path d="M16 4H20V8H24V12H20V16H16V12H12V8H16Z" fill="#c07cc5"/></svg>
<span class="a" style="left:251px;top:442px;letter-spacing:-0.21px;">atom.cpp</span>
<svg class="a" style="left:166px;top:477px;" width="11" height="21" viewBox="0 0 11 21"><path d="M1 1.5L9.5 10.5L1 19.5Z" fill="none" stroke="#f1f1f1" stroke-width="2"/></svg>
<svg class="a" style="left:212px;top:480px;" width="24" height="17" viewBox="0 0 24 17"><path d="M4 0H8V4H12V8H8V12H4V8H0V4H4Z" fill="#c07cc5"/><path d="M16 4H20V8H24V12H20V16H16V12H12V8H16Z" fill="#c07cc5"/></svg>
<span class="a" style="left:251px;top:478px;letter-spacing:-0.44px;">circle.cpp</span>
<svg class="a" style="left:166px;top:513px;" width="11" height="21" viewBox="0 0 11 21"><path d="M1 1.5L9.5 10.5L1 19.5Z" fill="none" stroke="#f1f1f1" stroke-width="2"/></svg>
<svg class="a" style="left:212px;top:516px;" width="24" height="17" viewBox="0 0 24 17"><path d="M4 0H8V4H12V8H8V12H4V8H0V4H4Z" fill="#c07cc5"/><path d="M16 4H20V8H24V12H20V16H16V12H12V8H16Z" fill="#c07cc5"/></svg>
<span class="a" style="left:251px;top:514px;letter-spacing:0.21px;">dropeffector.cpp</span>
<svg class="a" style="left:166px;top:549px;" width="11" height="21" viewBox="0 0 11 21"><path d="M1 1.5L9.5 10.5L1 19.5Z" fill="none" stroke="#f1f1f1" stroke-width="2"/></svg>
<svg class="a" style="left:212px;top:552px;" width="24" height="17" viewBox="0 0 24 17"><path d="M4 0H8V4H12V8H8V12H4V8H0V4H4Z" fill="#c07cc5"/><path d="M16 4H20V8H24V12H20V16H16V12H12V8H16Z" fill="#c07cc5"/></svg>
<span class="a" style="left:251px;top:550px;letter-spacing:0.06px;">gravitation.cpp</span>
<svg class="a" style="left:166px;top:585px;" width="11" height="21" viewBox="0 0 11 21"><path d="M1 1.5L9.5 10.5L1 19.5Z" fill="none" stroke="#f1f1f1" stroke-width="2"/></svg>
<svg class="a" style="left:212px;top:588px;" width="24" height="17" viewBox="0 0 24 17"><path d="M4 0H8V4H12V8H8V12H4V8H0V4H4Z" fill="#c07cc5"/><path d="M16 4H20V8H24V12H20V16H16V12H12V8H16Z" fill="#c07cc5"/></svg>
<span class="a" style="left:251px;top:586px;letter-spacing:-0.28px;">hair_collision.cpp</span>
<svg class="a" style="left:166px;top:621px;" width="11" height="21" viewBox="0 0 11 21"><path d="M1 1.5L9.5 10.5L1 19.5Z" fill="none" stroke="#f1f1f1" stroke-width="2"/></svg>
<svg class="a" style="left:212px;top:624px;" width="24" height="17" viewBox="0 0 24 17"><path d="M4 0H8V4H12V8H8V12H4V8H0V4H4Z" fill="#c07cc5"/><path d="M16 4H20V8H24V12H20V16H16V12H12V8H16Z" fill="#c07cc5"/></svg>
<span class="a" style="left:251px;top:622px;letter-spacing:-0.30px;">hair_constraint.cpp</span>
<svg class="a" style="left:166px;top:657px;" width="11" height="21" viewBox="0 0 11 21"><path d="M1 1.5L9.5 10.5L1 19.5Z" fill="none" stroke="#f1f1f1" stroke-width="2"/></svg>
<svg class="a" style="left:212px;top:660px;" width="24" height="17" viewBox="0 0 24 17"><path d="M4 0H8V4H12V8H8V12H4V8H0V4H4Z" fill="#c07cc5"/><path d="M16 4H20V8H24V12H20V16H16V12H12V8H16Z" fill="#c07cc5"/></svg>
<span class="a" style="left:251px;top:658px;letter-spacing:-0.14px;">hair_deformer.cpp</span>
<svg class="a" style="left:166px;top:693px;" width="11" height="21" viewBox="0 0 11 21"><path d="M1 1.5L9.5 10.5L1 19.5Z" fill="none" stroke="#f1f1f1" stroke-width="2"/></svg>
<svg class="a" style="left:212px;top:696px;" width="24" height="17" viewBox="0 0 24 17"><path d="M4 0H8V4H12V8H8V12H4V8H0V4H4Z" fill="#c07cc5"/><path d="M16 4H20V8H24V12H20V16H16V12H12V8H16Z" fill="#c07cc5"/></svg>
<span class="a" style="left:251px;top:694px;letter-spacing:-0.44px;">hair_force.cpp</span>
<svg class="a" style="left:166px;top:729px;" width="11" height="21" viewBox="0 0 11 21"><path d="M1 1.5L9.5 10.5L1 19.5Z" fill="none" stroke="#f1f1f1" stroke-width="2"/></svg>
<svg class="a" style="left:212px;top:732px;" width="24" height="17" viewBox="0 0 24 17"><path d="M4 0H8V4H12V8H8V12H4V8H0V4H4Z" fill="#c07cc5"/><path d="M16 4H20V8H24V12H20V16H16V12H12V8H16Z" fill="#c07cc5"/></svg>
<span class="a" style="left:251px;top:730px;letter-spacing:-0.23px;">hair_generator.cpp</span>
<svg class="a" style="left:166px;top:765px;" width="11" height="21" viewBox="0 0 11 21"><path d="M1 1.5L9.5 10.5L1 19.5Z" fill="none" stroke="#f1f1f1" stroke-width="2"/></svg>
<svg class="a" style="left:212px;top:768px;" width="24" height="17" viewBox="0 0 24 17"><path d="M4 0H8V4H12V8H8V12H4V8H0V4H4Z" fill="#c07cc5"/><path d="M16 4H20V8H24V12H20V16H16V12H12V8H16Z" fill="#c07cc5"/></svg>
<span class="a" style="left:251px;top:766px;letter-spacing:-0.82px;">hair_grass.cpp</span>
<svg class="a" style="left:166px;top:801px;" width="11" height="21" viewBox="0 0 11 21"><path d="M1 1.5L9.5 10.5L1 19.5Z" fill="none" stroke="#f1f1f1" stroke-width="2"/></svg>
<svg class="a" style="left:212px;top:804px;" width="24" height="17" viewBox="0 0 24 17"><path d="M4 0H8V4H12V8H8V12H4V8H0V4H4Z" fill="#c07cc5"/><path d="M16 4H20V8H24V12H20V16H16V12H12V8H16Z" fill="#c07cc5"/></svg>
<span class="a" style="left:251px;top:802px;letter-spacing:0.16px;">morphmixer.cpp</span>
<svg class="a" style="left:166px;top:837px;" width="11" height="21" viewBox="0 0 11 21"><path d="M1 1.5L9.5 10.5L1 19.5Z" fill="none" stroke="#f1f1f1" stroke-width="2"/></svg>
<svg class="a" style="left:212px;top:840px;" width="24" height="17" viewBox="0 0 24 17"><path d="M4 0H8V4H12V8H8V12H4V8H0V4H4Z" fill="#c07cc5"/><path d="M16 4H20V8H24V12H20V16H16V12H12V8H16Z" fill="#c07cc5"/></svg>
<span class="a" style="left:251px;top:838px;letter-spacing:0.12px;">noiseeffector.cpp</span>
<svg class="a" style="left:166px;top:873px;" width="11" height="21" viewBox="0 0 11 21"><path d="M1 1.5L9.5 10.5L1 19.5Z" fill="none" stroke="#f1f1f1" stroke-width="2"/></svg>
<svg class="a" style="left:212px;top:876px;" width="24" height="17" viewBox="0 0 24 17"><path d="M4 0H8V4H12V8H8V12H4V8H0V4H4Z" fill="#c07cc5"/><path d="M16 4H20V8H24V12H20V16H16V12H12V8H16Z" fill="#c07cc5"/></svg>
<span class="a" style="left:251px;top:874px;letter-spacing:-0.10px;">objectdata_greektemple.cpp</span>
<svg class="a" style="left:166px;top:909px;" width="11" height="21" viewBox="0 0 11 21"><path d="M1 1.5L9.5 10.5L1 19.5Z" fill="none" stroke="#f1f1f1" stroke-width="2"/></svg>
<svg class="a" style="left:212px;top:912px;" width="24" height="17" viewBox="0 0 24 17"><path d="M4 0H8V4H12V8H8V12H4V8H0V4H4Z" fill="#c07cc5"/><path d="M16 4H20V8H24V12H20V16H16V12H12V8H16Z" fill="#c07cc5"/></svg>
<span class="a" style="left:251px;top:910px;letter-spacing:-0.26px;">objectdata_heartshape.cpp</span>
<svg class="a" style="left:166px;top:945px;" width="11" height="21" viewBox="0 0 11 21"><path d="M1 1.5L9.5 10.5L1 19.5Z" fill="none" stroke="#f1f1f1" stroke-width="2"/></svg>
<svg class="a" style="left:212px;top:948px;" width="24" height="17" viewBox="0 0 24 17"><path d="M4 0H8V4H12V8H8V12H4V8H0V4H4Z" fill="#c07cc5"/><path d="M16 4H20V8H24V12H20V16H16V12H12V8H16Z" fill="#c07cc5"/></svg>
<span class="a" style="left:251px;top:946px;letter-spacing:-0.05px;">objectdata_hyperfile.cpp</span>
<svg class="a" style="left:166px;top:981px;" width="11" height="21" viewBox="0 0 11 21"><path d="M1 1.5L9.5 10.5L1 19.5Z" fill="none" stroke="#f1f1f1" stroke-width="2"/></svg>
<svg class="a" style="left:212px;top:984px;" width="24" height="17" viewBox="0 0 24 17"><path d="M4 0H8V4H12V8H8V12H4V8H0V4H4Z" fill="#c07cc5"/><path d="M16 4H20V8H24V12H20V16H16V12H12V8H16Z" fill="#c07cc5"/></svg>
<span class="a" style="left:251px;top:982px;letter-spacing:0.09px;">objectdata_latticeplanemodifier.cpp</span>
<svg class="a" style="left:166px;top:1017px;" width="11" height="21" viewBox="0 0 11 21"><path d="M1 1.5L9.5 10.5L1 19.5Z" fill="none" stroke="#f1f1f1" stroke-width="2"/></svg>
<svg class="a" style="left:212px;top:1020px;" width="24" height="17" viewBox="0 0 24 17"><path d="M4 0H8V4H12V8H8V12H4V8H0V4H4Z" fill="#c07cc5"/><path d="M16 4H20V8H24V12H20V16H16V12H12V8H16Z" fill="#c07cc5"/></svg>
<span class="a" style="left:251px;top:1018px;letter-spacing:-0.07px;">objectdata_loftedmesh.cpp</span>
<svg class="a" style="left:166px;top:1053px;" width="11" height="21" viewBox="0 0 11 21"><path d="M1 1.5L9.5 10.5L1 19.5Z" fill="none" stroke="#f1f1f1" stroke-width="2"/></svg>
<svg class="a" style="left:212px;top:1056px;" width="24" height="17" viewBox="0 0 24 17"><path d="M4 0H8V4H12V8H8V12H4V8H0V4H4Z" fill="#c07cc5"/><path d="M16 4H20V8H24V12H20V16H16V12H12V8H16Z" fill="#c07cc5"/></svg>
<span class="a" style="left:251px;top:1054px;letter-spacing:-0.09px;">objectdata_planebypolygons.cpp</span>
<svg class="a" style="left:166px;top:1089px;" width="11" height="21" viewBox="0 0 11 21"><path d="M1 1.5L9.5 10.5L1 19.5Z" fill="none" stroke="#f1f1f1" stroke-width="2"/></svg>
<svg class="a" style="left:212px;top:1092px;" width="24" height="17" viewBox="0 0 24 17"><path d="M4 0H8V4H12V8H8V12H4V8H0V4H4Z" fill="#c07cc5"/><path d="M16 4H20V8H24V12H20V16H16V12H12V8H16Z" fill="#c07cc5"/></svg>
<span class="a" style="left:251px;top:1090px;letter-spacing:0.13px;">objectdata_porcupinemodifier.cpp</span>
<svg class="a" style="left:166px;top:1125px;" width="11" height="21" viewBox="0 0 11 21"><path d="M1 1.5L9.5 10.5L1 19.5Z" fill="none" stroke="#f1f1f1" stroke-width="2"/></svg>
<svg class="a" style="left:212px;top:1128px;" width="24" height="17" viewBox="0 0 24 17"><path d="M4 0H8V4H12V8H8V12H4V8H0V4H4Z" fill="#c07cc5"/><path d="M16 4H20V8H24V12H20V16H16V12H12V8H16Z" fill="#c07cc5"/></svg>
<span class="a" style="left:251px;top:1126px;letter-spacing:-0.14px;">objectdata_revolvedmesh.cpp</span>
<svg class="a" style="left:166px;top:1161px;" width="11" height="21" viewBox="0 0 11 21"><path d="M1 1.5L9.5 10.5L1 19.5Z" fill="none" stroke="#f1f1f1" stroke-width="2"/></svg>
<svg class="a" style="left:212px;top:1164px;" width="24" height="17" viewBox="0 0 24 17"><path d="M4 0H8V4H12V8H8V12H4V8H0V4H4Z" fill="#c07cc5"/><path d="M16 4H20V8H24V12H20V16H16V12H12V8H16Z" fill="#c07cc5"/></svg>
<span class="a" style="left:251px;top:1162px;letter-spacing:-0.19px;">objectdata_ruledmesh.cpp</span>
<svg class="a" style="left:166px;top:1197px;" width="11" height="21" viewBox="0 0 11 21"><path d="M1 1.5L9.5 10.5L1 19.5Z" fill="none" stroke="#f1f1f1" stroke-width="2"/></svg>
<svg class="a" style="left:212px;top:1200px;" width="24" height="17" viewBox="0 0 24 17"><path d="M4 0H8V4H12V8H8V12H4V8H0V4H4Z" fill="#c07cc5"/><path d="M16 4H20V8H24V12H20V16H16V12H12V8H16Z" fill="#c07cc5"/></svg>
<span class="a" style="left:251px;top:1198px;letter-spacing:-0.02px;">objectdata_shufflingparticles.cpp</span>
<svg class="a" style="left:166px;top:1233px;" width="11" height="21" viewBox="0 0 11 21"><path d="M1 1.5L9.5 10.5L1 19.5Z" fill="none" stroke="#f1f1f1" stroke-width="2"/></svg>
<svg class="a" style="left:212px;top:1236px;" width="24" height="17" viewBox="0 0 24 17"><path d="M4 0H8V4H12V8H8V12H4V8H0V4H4Z" fill="#c07cc5"/><path d="M16 4H20V8H24V12H20V16H16V12H12V8H16Z" fill="#c07cc5"/></svg>
<span class="a" style="left:251px;top:1234px;letter-spacing:-0.14px;">objectdata_vertexhandle.cpp</span>
<div class="a" style="left:0px;top:1260px;width:667px;height:36px;background:#3f3f46;"></div>
<svg class="a" style="left:166px;top:1269px;" width="11" height="21" viewBox="0 0 11 21"><path d="M1 1.5L9.5 10.5L1 19.5Z" fill="none" stroke="#f1f1f1" stroke-width="2"/></svg>
<svg class="a" style="left:212px;top:1272px;" width="24" height="17" viewBox="0 0 24 17"><path d="M4 0H8V4H12V8H8V12H4V8H0V4H4Z" fill="#c07cc5"/><path d="M16 4H20V8H24V12H20V16H16V12H12V8H16Z" fill="#c07cc5"/></svg>
<span class="a" style="left:251px;top:1270px;letter-spacing:0.19px;">roundedtube.cpp</span>
<svg class="a" style="left:166px;top:1305px;" width="11" height="21" viewBox="0 0 11 21"><path d="M1 1.5L9.5 10.5L1 19.5Z" fill="none" stroke="#f1f1f1" stroke-width="2"/></svg>
<svg class="a" style="left:212px;top:1308px;" width="24" height="17" viewBox="0 0 24 17"><path d="M4 0H8V4H12V8H8V12H4V8H0V4H4Z" fill="#c07cc5"/><path d="M16 4H20V8H24V12H20V16H16V12H12V8H16Z" fill="#c07cc5"/></svg>
<span class="a" style="left:251px;top:1306px;letter-spacing:-0.05px;">spherify.cpp</span>
<svg class="a" style="left:166px;top:1341px;" width="11" height="21" viewBox="0 0 11 21"><path d="M1 1.5L9.5 10.5L1 19.5Z" fill="none" stroke="#f1f1f1" stroke-width="2"/></svg>
<svg class="a" style="left:212px;top:1344px;" width="24" height="17" viewBox="0 0 24 17"><path d="M4 0H8V4H12V8H8V12H4V8H0V4H4Z" fill="#c07cc5"/><path d="M16 4H20V8H24V12H20V16H16V12H12V8H16Z" fill="#c07cc5"/></svg>
<span class="a" style="left:251px;top:1342px;letter-spacing:-0.03px;">triangulate.cpp</span>
<svg class="a" style="left:130px;top:1377px;" width="11" height="21" viewBox="0 0 11 21"><path d="M1 1.5L9.5 10.5L1 19.5Z" fill="none" stroke="#f1f1f1" stroke-width="2"/></svg>
<svg class="a" style="left:174px;top:1376px;" width="30" height="26" viewBox="0 0 30 26"><path d="M0 21V1H16L18 5H26V21Z" fill="#dcb67a"/><path d="M2 3.5H15" stroke="#252526" stroke-width="1.5"/><path d="M-1 8H19L11 17V26H7V17Z" fill="#252526"/><path d="M1 9.5H17L10 16.5V25H8V16.5Z" fill="#c8c8c8"/></svg>
<span class="a" style="left:215px;top:1378px;letter-spacing:0.06px;">other</span>
<svg class="a" style="left:130px;top:1413px;" width="11" height="21" viewBox="0 0 11 21"><path d="M1 1.5L9.5 10.5L1 19.5Z" fill="none" stroke="#f1f1f1" stroke-width="2"/></svg>
<svg class="a" style="left:174px;top:1412px;" width="30" height="26" viewBox="0 0 30 26"><path d="M0 21V1H16L18 5H26V21Z" fill="#dcb67a"/><path d="M2 3.5H15" stroke="#252526" stroke-width="1.5"/><path d="M-1 8H19L11 17V26H7V17Z" fill="#252526"/><path d="M1 9.5H17L10 16.5V25H8V16.5Z" fill="#c8c8c8"/></svg>
<span class="a" style="left:215px;top:1414px;letter-spacing:0.24px;">painting</span>
<svg class="a" style="left:130px;top:1449px;" width="11" height="21" viewBox="0 0 11 21"><path d="M1 1.5L9.5 10.5L1 19.5Z" fill="none" stroke="#f1f1f1" stroke-width="2"/></svg>
<svg class="a" style="left:174px;top:1448px;" width="30" height="26" viewBox="0 0 30 26"><path d="M0 21V1H16L18 5H26V21Z" fill="#dcb67a"/><path d="M2 3.5H15" stroke="#252526" stroke-width="1.5"/><path d="M-1 8H19L11 17V26H7V17Z" fill="#252526"/><path d="M1 9.5H17L10 16.5V25H8V16.5Z" fill="#c8c8c8"/></svg>
<span class="a" style="left:215px;top:1450px;letter-spacing:0.32px;">pgp</span>
<svg class="a" style="left:130px;top:1485px;" width="11" height="21" viewBox="0 0 11 21"><path d="M1 1.5L9.5 10.5L1 19.5Z" fill="none" stroke="#f1f1f1" stroke-width="2"/></svg>
<svg class="a" style="left:174px;top:1484px;" width="30" height="26" viewBox="0 0 30 26"><path d="M0 21V1H16L18 5H26V21Z" fill="#dcb67a"/><path d="M2 3.5H15" stroke="#252526" stroke-width="1.5"/><path d="M-1 8H19L11 17V26H7V17Z" fill="#252526"/><path d="M1 9.5H17L10 16.5V25H8V16.5Z" fill="#c8c8c8"/></svg>
<span class="a" style="left:215px;top:1486px;letter-spacing:0.03px;">sculpting</span>
<svg class="a" style="left:130px;top:1521px;" width="11" height="21" viewBox="0 0 11 21"><path d="M1 1.5L9.5 10.5L1 19.5Z" fill="none" stroke="#f1f1f1" stroke-width="2"/></svg>
<svg class="a" style="left:174px;top:1520px;" width="30" height="26" viewBox="0 0 30 26"><path d="M0 21V1H16L18 5H26V21Z" fill="#dcb67a"/><path d="M2 3.5H15" stroke="#252526" stroke-width="1.5"/><path d="M-1 8H19L11 17V26H7V17Z" fill="#252526"/><path d="M1 9.5H17L10 16.5V25H8V16.5Z" fill="#c8c8c8"/></svg>
<span class="a" style="left:215px;top:1522px;letter-spacing:-0.57px;">shader</span>
<svg class="a" style="left:130px;top:1557px;" width="11" height="21" viewBox="0 0 11 21"><path d="M1 1.5L9.5 10.5L1 19.5Z" fill="none" stroke="#f1f1f1" stroke-width="2"/></svg>
<svg class="a" style="left:174px;top:1556px;" width="30" height="26" viewBox="0 0 30 26"><path d="M0 21V1H16L18 5H26V21Z" fill="#dcb67a"/><path d="M2 3.5H15" stroke="#252526" stroke-width="1.5"/><path d="M-1 8H19L11 17V26H7V17Z" fill="#252526"/><path d="M1 9.5H17L10 16.5V25H8V16.5Z" fill="#c8c8c8"/></svg>
<span class="a" style="left:215px;top:1558px;letter-spacing:-0.46px;">tag</span>
</div>
<div style="left:12px;top:1962px;width:207px;height:42px;background:#3f3f46;"></div>
<div style="left:14px;top:1962px;width:203px;height:40px;background:#2d2d30;"></div>
<span style="left:24px;top:1972px;color:#0097fb;letter-spacing:-0.05px;">Solution Explorer</span>
<span style="left:230px;top:1972px;color:#d0d0d0;letter-spacing:-0.73px;">Class View</span>
<div style="left:731px;top:242px;width:282px;height:40px;background:#007acc;"></div>
<div style="left:731px;top:282px;width:2469px;height:4px;background:#007acc;"></div>
<span style="left:739px;top:253px;color:#ffffff;letter-spacing:0.26px;">roundedtube.cpp</span>
<svg style="left:944px;top:259px;" width="18" height="14" viewBox="0 0 18 14"><path d="M0 7H7M7 1V13M7 3H17V10H7M7 11H17" fill="none" stroke="#f1f1f1" stroke-width="2"/></svg>
<svg style="left:981px;top:258px;" width="20" height="16" viewBox="0 0 20 16"><path d="M1 0L19 16M19 0L1 16" stroke="#f1f1f1" stroke-width="2.6"/></svg>
<svg style="left:3144px;top:262px;" width="16" height="8" viewBox="0 0 16 8"><path d="M0 0H16L8 8Z" fill="#f1f1f1"/></svg>
<svg style="left:3178px;top:252px;" width="21" height="21" viewBox="0 0 21 21"><circle cx="10.5" cy="10.5" r="6" fill="none" stroke="#f1f1f1" stroke-width="4"/><g stroke="#f1f1f1" stroke-width="3.5"><path d="M10.5 0V4M10.5 17V21M0 10.5H4M17 10.5H21M3 3L6 6M15 15L18 18M18 3L15 6M3 18L6 15"/></g></svg>
<div style="left:729px;top:286px;width:2px;height:1322px;background:#3a3a3e;"></div>
<div style="left:731px;top:286px;width:2431px;height:1286px;background:#1e1e1e;"></div>
<div style="left:731px;top:286px;width:41px;height:1286px;background:#333333;"></div>
<div style="left:731px;top:286px;width:2431px;height:1286px;overflow:hidden">
<div class="a" style="left:205.4px;top:0px;width:2px;height:285.5px;background:#a5a5a5;"></div>
<div class="a" style="left:205.39999999999998px;top:160.5px;width:11px;height:2px;background:#a5a5a5;"></div>
<div class="a" style="left:205.39999999999998px;top:283.5px;width:11px;height:2px;background:#a5a5a5;"></div>
<div class="a" style="left:205.4px;top:357px;width:2px;height:929px;background:#a5a5a5;"></div>
<div class="a" style="left:194px;top:336.5px;width:17px;height:17px;border:2px solid #a5a5a5;background:#1e1e1e"></div>
<div class="a" style="left:199px;top:346px;width:11px;height:2px;background:#e0e0e0;"></div>
<div class="a" style="left:226.29999999999995px;top:0px;width:2.6px;height:244px;background:repeating-linear-gradient(to bottom,#878787 0,#878787 7.2px,transparent 7.2px,transparent 14.4px);background-position:0 -0.0px;background-size:100% 14.4px"></div>
<div class="a" style="left:260.5px;top:0px;width:2.6px;height:122px;background:repeating-linear-gradient(to bottom,#878787 0,#878787 7.2px,transparent 7.2px,transparent 14.4px);background-position:0 -0.0px;background-size:100% 14.4px"></div>
<div class="a" style="left:226.29999999999995px;top:412px;width:2.6px;height:874px;background:repeating-linear-gradient(to bottom,#878787 0,#878787 7.2px,transparent 7.2px,transparent 14.4px);background-position:0 -8.8px;background-size:100% 14.4px"></div>
<div class="a" style="left:176px;top:611.6px;width:12px;height:40.8px;background:#577430;"></div>
<div class="a" style="left:216px;top:694px;width:2203px;height:32px;border:4px solid #464646"></div>
<div class="a" style="left:221px;top:694px;width:2px;height:38px;background:#f0f0f0;"></div>
<svg class="a" style="left:5px;top:697.9px;" width="31" height="30" viewBox="0 0 31 30"><circle cx="15.5" cy="15" r="14.6" fill="#f44e42"/><path d="M4 8.5H15.5V3L29.5 15L15.5 27V21.5H4Z" fill="#ffcc20" stroke="#c8c8c8" stroke-width="1.6"/></svg>
<svg class="a" style="left:406px;top:1111.3px;" width="24" height="22" viewBox="0 0 24 22"><path d="M0 0L16 11L0 22Z" fill="#388a34"/><rect x="20" y="0" width="2.5" height="22" fill="#388a34"/></svg>
<span class="a c" style="left:76px;top:6.0px;color:#2b91af">267</span>
<svg class="a" style="left:230.7px;top:13.0px;" width="13.5" height="12" viewBox="0 0 13.5 12"><path d="M0 6H12.5M7 0.7L12.5 6L7 11.3" fill="none" stroke="#1b5964" stroke-width="1.9"/></svg>
<svg class="a" style="left:265.0px;top:13.0px;" width="13.5" height="12" viewBox="0 0 13.5 12"><path d="M0 6H12.5M7 0.7L12.5 6L7 11.3" fill="none" stroke="#1b5964" stroke-width="1.9"/></svg>
<svg class="a" style="left:299.3px;top:13.0px;" width="13.5" height="12" viewBox="0 0 13.5 12"><path d="M0 6H12.5M7 0.7L12.5 6L7 11.3" fill="none" stroke="#1b5964" stroke-width="1.9"/></svg>
<span class="a c" style="left:220.25px;top:6.0px">      <i style="color:#d8a0df">for</i><i style="color:#1b5964">·</i><i style="color:#b4b4b4">(</i><i style="color:#9cdcfe">i</i><i style="color:#1b5964">·</i><i style="color:#b4b4b4">=</i><i style="color:#1b5964">·</i><i style="color:#b5cea8">0</i><i style="color:#b4b4b4">;</i><i style="color:#1b5964">·</i><i style="color:#9cdcfe">i</i><i style="color:#1b5964">·</i><i style="color:#b4b4b4">&lt;</i><i style="color:#1b5964">·</i><i style="color:#9cdcfe">pcnt</i><i style="color:#b4b4b4">;</i><i style="color:#1b5964">·</i><i style="color:#9cdcfe">i</i><i style="color:#b4b4b4">++)</i></span>
<span class="a c" style="left:76px;top:46.8px;color:#2b91af">268</span>
<svg class="a" style="left:230.7px;top:53.8px;" width="13.5" height="12" viewBox="0 0 13.5 12"><path d="M0 6H12.5M7 0.7L12.5 6L7 11.3" fill="none" stroke="#1b5964" stroke-width="1.9"/></svg>
<svg class="a" style="left:265.0px;top:53.8px;" width="13.5" height="12" viewBox="0 0 13.5 12"><path d="M0 6H12.5M7 0.7L12.5 6L7 11.3" fill="none" stroke="#1b5964" stroke-width="1.9"/></svg>
<svg class="a" style="left:299.3px;top:53.8px;" width="13.5" height="12" viewBox="0 0 13.5 12"><path d="M0 6H12.5M7 0.7L12.5 6L7 11.3" fill="none" stroke="#1b5964" stroke-width="1.9"/></svg>
<svg class="a" style="left:333.6px;top:53.8px;" width="13.5" height="12" viewBox="0 0 13.5 12"><path d="M0 6H12.5M7 0.7L12.5 6L7 11.3" fill="none" stroke="#1b5964" stroke-width="1.9"/></svg>
<span class="a c" style="left:220.25px;top:46.8px">        <i style="color:#9cdcfe">padr</i><i style="color:#b4b4b4">[</i><i style="color:#9cdcfe">i</i><i style="color:#b4b4b4">]</i><i style="color:#1b5964">·</i><i style="color:#b4b4b4">=</i><i style="color:#1b5964">·</i><i style="color:#4ec9b0">Vector</i><i style="color:#b4b4b4">(</i><i style="color:#9cdcfe">padr</i><i style="color:#b4b4b4">[</i><i style="color:#9cdcfe">i</i><i style="color:#b4b4b4">].</i><i style="color:#c8c8c8">x</i><i style="color:#b4b4b4">,</i><i style="color:#1b5964">·</i><i style="color:#9cdcfe">padr</i><i style="color:#b4b4b4">[</i><i style="color:#9cdcfe">i</i><i style="color:#b4b4b4">].</i><i style="color:#c8c8c8">z</i><i style="color:#b4b4b4">,</i><i style="color:#1b5964">·</i><i style="color:#b4b4b4">-</i><i style="color:#9cdcfe">padr</i><i style="color:#b4b4b4">[</i><i style="color:#9cdcfe">i</i><i style="color:#b4b4b4">].</i><i style="color:#c8c8c8">y</i><i style="color:#b4b4b4">);</i></span>
<span class="a c" style="left:76px;top:87.5px;color:#2b91af">269</span>
<svg class="a" style="left:230.7px;top:94.5px;" width="13.5" height="12" viewBox="0 0 13.5 12"><path d="M0 6H12.5M7 0.7L12.5 6L7 11.3" fill="none" stroke="#1b5964" stroke-width="1.9"/></svg>
<svg class="a" style="left:265.0px;top:94.5px;" width="13.5" height="12" viewBox="0 0 13.5 12"><path d="M0 6H12.5M7 0.7L12.5 6L7 11.3" fill="none" stroke="#1b5964" stroke-width="1.9"/></svg>
<svg class="a" style="left:299.3px;top:94.5px;" width="13.5" height="12" viewBox="0 0 13.5 12"><path d="M0 6H12.5M7 0.7L12.5 6L7 11.3" fill="none" stroke="#1b5964" stroke-width="1.9"/></svg>
<span class="a c" style="left:220.25px;top:87.5px">      <i style="color:#d8a0df">break</i><i style="color:#b4b4b4">;</i></span>
<span class="a c" style="left:76px;top:128.3px;color:#2b91af">270</span>
<svg class="a" style="left:230.7px;top:135.3px;" width="13.5" height="12" viewBox="0 0 13.5 12"><path d="M0 6H12.5M7 0.7L12.5 6L7 11.3" fill="none" stroke="#1b5964" stroke-width="1.9"/></svg>
<span class="a c" style="left:220.25px;top:128.3px">  <i style="color:#b4b4b4">}</i></span>
<span class="a c" style="left:76px;top:169.1px;color:#2b91af">271</span>
<span class="a c" style="left:76px;top:209.9px;color:#2b91af">272</span>
<svg class="a" style="left:230.7px;top:216.9px;" width="13.5" height="12" viewBox="0 0 13.5 12"><path d="M0 6H12.5M7 0.7L12.5 6L7 11.3" fill="none" stroke="#1b5964" stroke-width="1.9"/></svg>
<span class="a c" style="left:220.25px;top:209.9px">  <i style="color:#c8c8c8">op</i><i style="color:#b4b4b4">-&gt;</i><i style="color:#dcdcaa">Message</i><i style="color:#b4b4b4">(</i><i style="color:#beb7ff">MSG_UPDATE</i><i style="color:#b4b4b4">);</i></span>
<span class="a c" style="left:76px;top:250.6px;color:#2b91af">273</span>
<span class="a c" style="left:220.25px;top:250.6px"><i style="color:#b4b4b4">}</i></span>
<span class="a c" style="left:76px;top:291.4px;color:#2b91af">274</span>
<span class="a c" style="left:76px;top:332.2px;color:#2b91af">275</span>
<span class="a c" style="left:220.25px;top:332.2px"><i style="color:#4ec9b0">BaseObject</i><i style="color:#b4b4b4">*</i><i style="color:#1b5964">·</i><i style="color:#4ec9b0">RoundedTube</i><i style="color:#b4b4b4">::</i><i style="color:#dcdcaa">GetVirtualObjects</i><i style="color:#b4b4b4">(</i><i style="color:#4ec9b0">BaseObject</i><i style="color:#b4b4b4">*</i><i style="color:#1b5964">·</i><i style="color:#9a9a9a">op</i><i style="color:#b4b4b4">,</i><i style="color:#1b5964">·</i><i style="color:#569cd6">const</i><i style="color:#1b5964">·</i><i style="color:#4ec9b0">HierarchyHelp</i><i style="color:#b4b4b4">*</i><i style="color:#1b5964">·</i><i style="color:#9a9a9a">hh</i><i style="color:#b4b4b4">)</i></span>
<span class="a c" style="left:76px;top:372.9px;color:#2b91af">276</span>
<span class="a c" style="left:220.25px;top:372.9px"><i style="color:#b4b4b4">{</i></span>
<span class="a c" style="left:76px;top:413.7px;color:#2b91af">277</span>
<svg class="a" style="left:230.7px;top:420.7px;" width="13.5" height="12" viewBox="0 0 13.5 12"><path d="M0 6H12.5M7 0.7L12.5 6L7 11.3" fill="none" stroke="#1b5964" stroke-width="1.9"/></svg>
<span class="a c" style="left:220.25px;top:413.7px">  <i style="color:#4ec9b0">LineObject</i><i style="color:#b4b4b4">*</i><i style="color:#1b5964">·</i><i style="color:#9cdcfe">lop</i><i style="color:#1b5964">·</i><i style="color:#b4b4b4">=</i><i style="color:#1b5964">·</i><i style="color:#569cd6">nullptr</i><i style="color:#b4b4b4">;</i></span>
<span class="a c" style="left:76px;top:454.5px;color:#2b91af">278</span>
<svg class="a" style="left:230.7px;top:461.5px;" width="13.5" height="12" viewBox="0 0 13.5 12"><path d="M0 6H12.5M7 0.7L12.5 6L7 11.3" fill="none" stroke="#1b5964" stroke-width="1.9"/></svg>
<span class="a c" style="left:220.25px;top:454.5px">  <i style="color:#4ec9b0">BaseObject</i><i style="color:#b4b4b4">*</i><i style="color:#1b5964">·</i><i style="color:#9cdcfe">ret</i><i style="color:#1b5964">·</i><i style="color:#b4b4b4">=</i><i style="color:#1b5964">·</i><i style="color:#569cd6">nullptr</i><i style="color:#b4b4b4">;</i></span>
<span class="a c" style="left:76px;top:495.2px;color:#2b91af">279</span>
<span class="a c" style="left:76px;top:536.0px;color:#2b91af">280</span>
<svg class="a" style="left:230.7px;top:543.0px;" width="13.5" height="12" viewBox="0 0 13.5 12"><path d="M0 6H12.5M7 0.7L12.5 6L7 11.3" fill="none" stroke="#1b5964" stroke-width="1.9"/></svg>
<span class="a c" style="left:220.25px;top:536.0px">  <i style="color:#4ec9b0">Bool</i><i style="color:#1b5964">·</i><i style="color:#9cdcfe">dirty</i><i style="color:#1b5964">·</i><i style="color:#b4b4b4">=</i><i style="color:#1b5964">·</i><i style="color:#9a9a9a">op</i><i style="color:#b4b4b4">-&gt;</i><i style="color:#dcdcaa">CheckCache</i><i style="color:#b4b4b4">(</i><i style="color:#9a9a9a">hh</i><i style="color:#b4b4b4">)</i><i style="color:#1b5964">·</i><i style="color:#b4b4b4">||</i><i style="color:#1b5964">·</i><i style="color:#9a9a9a">op</i><i style="color:#b4b4b4">-&gt;</i><i style="color:#dcdcaa">IsDirty</i><i style="color:#b4b4b4">(</i><i style="color:#4ec9b0">DIRTYFLAGS</i><i style="color:#b4b4b4">::</i><i style="color:#b8d7a3">DATA</i><i style="color:#b4b4b4">);</i></span>
<span class="a c" style="left:76px;top:576.8px;color:#2b91af">281</span>
<svg class="a" style="left:230.7px;top:583.8px;" width="13.5" height="12" viewBox="0 0 13.5 12"><path d="M0 6H12.5M7 0.7L12.5 6L7 11.3" fill="none" stroke="#1b5964" stroke-width="1.9"/></svg>
<span class="a c" style="left:220.25px;top:576.8px">  <i style="color:#d8a0df">if</i><i style="color:#1b5964">·</i><i style="color:#b4b4b4">(!</i><i style="color:#9cdcfe">dirty</i><i style="color:#b4b4b4">)</i></span>
<span class="a c" style="left:76px;top:617.6px;color:#2b91af">282</span>
<svg class="a" style="left:230.7px;top:624.6px;" width="13.5" height="12" viewBox="0 0 13.5 12"><path d="M0 6H12.5M7 0.7L12.5 6L7 11.3" fill="none" stroke="#1b5964" stroke-width="1.9"/></svg>
<svg class="a" style="left:265.0px;top:624.6px;" width="13.5" height="12" viewBox="0 0 13.5 12"><path d="M0 6H12.5M7 0.7L12.5 6L7 11.3" fill="none" stroke="#1b5964" stroke-width="1.9"/></svg>
<span class="a c" style="left:220.25px;top:617.6px">    <i style="color:#d8a0df">return</i><i style="color:#1b5964">·</i><i style="color:#9a9a9a">op</i><i style="color:#b4b4b4">-&gt;</i><i style="color:#dcdcaa">GetCache</i><i style="color:#b4b4b4">();</i></span>
<span class="a c" style="left:76px;top:658.3px;color:#2b91af">283</span>
<span class="a c" style="left:76px;top:699.1px;color:#2b91af">284</span>
<svg class="a" style="left:230.7px;top:706.1px;" width="13.5" height="12" viewBox="0 0 13.5 12"><path d="M0 6H12.5M7 0.7L12.5 6L7 11.3" fill="none" stroke="#1b5964" stroke-width="1.9"/></svg>
<span class="a c" style="left:220.25px;top:699.1px">  <i style="color:#4ec9b0">BaseContainer</i><i style="color:#b4b4b4">*</i><i style="color:#1b5964">·</i><i style="color:#9cdcfe">data</i><i style="color:#1b5964">·</i><i style="color:#b4b4b4">=</i><i style="color:#1b5964">·</i><i style="color:#9a9a9a">op</i><i style="color:#b4b4b4">-&gt;</i><i style="color:#dcdcaa">GetDataInstance</i><i style="color:#b4b4b4">();</i></span>
<span class="a c" style="left:76px;top:739.9px;color:#2b91af">285</span>
<span class="a c" style="left:76px;top:780.6px;color:#2b91af">286</span>
<svg class="a" style="left:230.7px;top:787.6px;" width="13.5" height="12" viewBox="0 0 13.5 12"><path d="M0 6H12.5M7 0.7L12.5 6L7 11.3" fill="none" stroke="#1b5964" stroke-width="1.9"/></svg>
<span class="a c" style="left:220.25px;top:780.6px">  <i style="color:#4ec9b0">Float</i><i style="color:#1b5964">·</i><i style="color:#9cdcfe">rad</i><i style="color:#1b5964">·</i><i style="color:#b4b4b4">=</i><i style="color:#1b5964">·</i><i style="color:#9cdcfe">data</i><i style="color:#b4b4b4">-&gt;</i><i style="color:#dcdcaa">GetFloat</i><i style="color:#b4b4b4">(</i><i style="color:#b8d7a3">TUBEOBJECT_RAD</i><i style="color:#b4b4b4">,</i><i style="color:#1b5964">·</i><i style="color:#b5cea8">200.0</i><i style="color:#b4b4b4">);</i></span>
<span class="a c" style="left:76px;top:821.4px;color:#2b91af">287</span>
<svg class="a" style="left:230.7px;top:828.4px;" width="13.5" height="12" viewBox="0 0 13.5 12"><path d="M0 6H12.5M7 0.7L12.5 6L7 11.3" fill="none" stroke="#1b5964" stroke-width="1.9"/></svg>
<span class="a c" style="left:220.25px;top:821.4px">  <i style="color:#4ec9b0">Float</i><i style="color:#1b5964">·</i><i style="color:#9cdcfe">iradx</i><i style="color:#1b5964">·</i><i style="color:#b4b4b4">=</i><i style="color:#1b5964">·</i><i style="color:#9cdcfe">data</i><i style="color:#b4b4b4">-&gt;</i><i style="color:#dcdcaa">GetFloat</i><i style="color:#b4b4b4">(</i><i style="color:#b8d7a3">TUBEOBJECT_IRADX</i><i style="color:#b4b4b4">,</i><i style="color:#1b5964">·</i><i style="color:#b5cea8">50.0</i><i style="color:#b4b4b4">);</i></span>
<span class="a c" style="left:76px;top:862.2px;color:#2b91af">288</span>
<svg class="a" style="left:230.7px;top:869.2px;" width="13.5" height="12" viewBox="0 0 13.5 12"><path d="M0 6H12.5M7 0.7L12.5 6L7 11.3" fill="none" stroke="#1b5964" stroke-width="1.9"/></svg>
<span class="a c" style="left:220.25px;top:862.2px">  <i style="color:#4ec9b0">Float</i><i style="color:#1b5964">·</i><i style="color:#9cdcfe">irady</i><i style="color:#1b5964">·</i><i style="color:#b4b4b4">=</i><i style="color:#1b5964">·</i><i style="color:#9cdcfe">data</i><i style="color:#b4b4b4">-&gt;</i><i style="color:#dcdcaa">GetFloat</i><i style="color:#b4b4b4">(</i><i style="color:#b8d7a3">TUBEOBJECT_IRADY</i><i style="color:#b4b4b4">,</i><i style="color:#1b5964">·</i><i style="color:#b5cea8">50.0</i><i style="color:#b4b4b4">);</i></span>
<span class="a c" style="left:76px;top:902.9px;color:#2b91af">289</span>
<svg class="a" style="left:230.7px;top:909.9px;" width="13.5" height="12" viewBox="0 0 13.5 12"><path d="M0 6H12.5M7 0.7L12.5 6L7 11.3" fill="none" stroke="#1b5964" stroke-width="1.9"/></svg>
<svg class="a" style="left:436.5px;top:909.9px;" width="13.5" height="12" viewBox="0 0 13.5 12"><path d="M0 6H12.5M7 0.7L12.5 6L7 11.3" fill="none" stroke="#1b5964" stroke-width="1.9"/></svg>
<span class="a c" style="left:220.25px;top:902.9px">  <i style="color:#4ec9b0">Float</i><i style="color:#1b5964">·</i><i style="color:#9cdcfe">rrad</i>  <i style="color:#b4b4b4">=</i><i style="color:#1b5964">·</i><i style="color:#9cdcfe">data</i><i style="color:#b4b4b4">-&gt;</i><i style="color:#dcdcaa">GetFloat</i><i style="color:#b4b4b4">(</i><i style="color:#b8d7a3">TUBEOBJECT_ROUNDRAD</i><i style="color:#b4b4b4">,</i><i style="color:#1b5964">·</i><i style="color:#b5cea8">10.0</i><i style="color:#b4b4b4">);</i></span>
<span class="a c" style="left:76px;top:943.7px;color:#2b91af">290</span>
<svg class="a" style="left:230.7px;top:950.7px;" width="13.5" height="12" viewBox="0 0 13.5 12"><path d="M0 6H12.5M7 0.7L12.5 6L7 11.3" fill="none" stroke="#1b5964" stroke-width="1.9"/></svg>
<svg class="a" style="left:410.8px;top:950.7px;" width="13.5" height="12" viewBox="0 0 13.5 12"><path d="M0 6H12.5M7 0.7L12.5 6L7 11.3" fill="none" stroke="#1b5964" stroke-width="1.9"/></svg>
<span class="a c" style="left:220.25px;top:943.7px">  <i style="color:#4ec9b0">Int32</i><i style="color:#1b5964">·</i><i style="color:#9cdcfe">sub</i> <i style="color:#1b5964">·</i><i style="color:#b4b4b4">=</i><i style="color:#1b5964">·</i><i style="color:#dcdcaa">CalcLOD</i><i style="color:#b4b4b4">(</i><i style="color:#9cdcfe">data</i><i style="color:#b4b4b4">-&gt;</i><i style="color:#dcdcaa">GetInt32</i><i style="color:#b4b4b4">(</i><i style="color:#b8d7a3">TUBEOBJECT_SUB</i><i style="color:#b4b4b4">,</i><i style="color:#1b5964">·</i><i style="color:#b5cea8">1</i><i style="color:#b4b4b4">),</i><i style="color:#1b5964">·</i><i style="color:#9a9a9a">hh</i><i style="color:#b4b4b4">-&gt;</i><i style="color:#dcdcaa">GetLOD</i><i style="color:#b4b4b4">(),</i><i style="color:#1b5964">·</i><i style="color:#b5cea8">1</i><i style="color:#b4b4b4">,</i><i style="color:#1b5964">·</i><i style="color:#b5cea8">1000</i><i style="color:#b4b4b4">);</i></span>
<span class="a c" style="left:76px;top:984.5px;color:#2b91af">291</span>
<svg class="a" style="left:230.7px;top:991.5px;" width="13.5" height="12" viewBox="0 0 13.5 12"><path d="M0 6H12.5M7 0.7L12.5 6L7 11.3" fill="none" stroke="#1b5964" stroke-width="1.9"/></svg>
<span class="a c" style="left:220.25px;top:984.5px">  <i style="color:#4ec9b0">Int32</i><i style="color:#1b5964">·</i><i style="color:#9cdcfe">rsub</i><i style="color:#1b5964">·</i><i style="color:#b4b4b4">=</i><i style="color:#1b5964">·</i><i style="color:#dcdcaa">CalcLOD</i><i style="color:#b4b4b4">(</i><i style="color:#9cdcfe">data</i><i style="color:#b4b4b4">-&gt;</i><i style="color:#dcdcaa">GetInt32</i><i style="color:#b4b4b4">(</i><i style="color:#b8d7a3">TUBEOBJECT_ROUNDSUB</i><i style="color:#b4b4b4">,</i><i style="color:#1b5964">·</i><i style="color:#b5cea8">8</i><i style="color:#b4b4b4">),</i><i style="color:#1b5964">·</i><i style="color:#9a9a9a">hh</i><i style="color:#b4b4b4">-&gt;</i><i style="color:#dcdcaa">GetLOD</i><i style="color:#b4b4b4">(),</i><i style="color:#1b5964">·</i><i style="color:#b5cea8">1</i><i style="color:#b4b4b4">,</i><i style="color:#1b5964">·</i><i style="color:#b5cea8">1000</i><i style="color:#b4b4b4">);</i></span>
<span class="a c" style="left:76px;top:1025.2px;color:#2b91af">292</span>
<svg class="a" style="left:230.7px;top:1032.2px;" width="13.5" height="12" viewBox="0 0 13.5 12"><path d="M0 6H12.5M7 0.7L12.5 6L7 11.3" fill="none" stroke="#1b5964" stroke-width="1.9"/></svg>
<svg class="a" style="left:410.8px;top:1032.2px;" width="13.5" height="12" viewBox="0 0 13.5 12"><path d="M0 6H12.5M7 0.7L12.5 6L7 11.3" fill="none" stroke="#1b5964" stroke-width="1.9"/></svg>
<span class="a c" style="left:220.25px;top:1025.2px">  <i style="color:#4ec9b0">Int32</i><i style="color:#1b5964">·</i><i style="color:#9cdcfe">seg</i> <i style="color:#1b5964">·</i><i style="color:#b4b4b4">=</i><i style="color:#1b5964">·</i><i style="color:#dcdcaa">CalcLOD</i><i style="color:#b4b4b4">(</i><i style="color:#9cdcfe">data</i><i style="color:#b4b4b4">-&gt;</i><i style="color:#dcdcaa">GetInt32</i><i style="color:#b4b4b4">(</i><i style="color:#b8d7a3">TUBEOBJECT_SEG</i><i style="color:#b4b4b4">,</i><i style="color:#1b5964">·</i><i style="color:#b5cea8">36</i><i style="color:#b4b4b4">),</i><i style="color:#1b5964">·</i><i style="color:#9a9a9a">hh</i><i style="color:#b4b4b4">-&gt;</i><i style="color:#dcdcaa">GetLOD</i><i style="color:#b4b4b4">(),</i><i style="color:#1b5964">·</i><i style="color:#b5cea8">3</i><i style="color:#b4b4b4">,</i><i style="color:#1b5964">·</i><i style="color:#b5cea8">1000</i><i style="color:#b4b4b4">);</i></span>
<span class="a c" style="left:76px;top:1066.0px;color:#2b91af">293</span>
<svg class="a" style="left:230.7px;top:1073.0px;" width="13.5" height="12" viewBox="0 0 13.5 12"><path d="M0 6H12.5M7 0.7L12.5 6L7 11.3" fill="none" stroke="#1b5964" stroke-width="1.9"/></svg>
<span class="a c" style="left:220.25px;top:1066.0px">  <i style="color:#4ec9b0">Int32</i><i style="color:#1b5964">·</i><i style="color:#9cdcfe">axis</i><i style="color:#1b5964">·</i><i style="color:#b4b4b4">=</i><i style="color:#1b5964">·</i><i style="color:#9cdcfe">data</i><i style="color:#b4b4b4">-&gt;</i><i style="color:#dcdcaa">GetInt32</i><i style="color:#b4b4b4">(</i><i style="color:#b8d7a3">PRIM_AXIS</i><i style="color:#b4b4b4">);</i></span>
<span class="a c" style="left:76px;top:1106.8px;color:#2b91af">294</span>
<svg class="a" style="left:230.7px;top:1113.8px;" width="13.5" height="12" viewBox="0 0 13.5 12"><path d="M0 6H12.5M7 0.7L12.5 6L7 11.3" fill="none" stroke="#1b5964" stroke-width="1.9"/></svg>
<span class="a c" style="left:220.25px;top:1106.8px">  <i style="color:#4ec9b0">Int32</i><i style="color:#1b5964">·</i><i style="color:#9cdcfe">i</i><i style="color:#b4b4b4">;</i></span>
<span class="a c" style="left:76px;top:1147.6px;color:#2b91af">295</span>
<svg class="a" style="left:230.7px;top:1154.6px;" width="13.5" height="12" viewBox="0 0 13.5 12"><path d="M0 6H12.5M7 0.7L12.5 6L7 11.3" fill="none" stroke="#1b5964" stroke-width="1.9"/></svg>
<span class="a c" style="left:220.25px;top:1147.6px">  <i style="color:#4ec9b0">Float</i><i style="color:#1b5964">·</i><i style="color:#9cdcfe">sn</i><i style="color:#b4b4b4">,</i><i style="color:#1b5964">·</i><i style="color:#9cdcfe">cs</i><i style="color:#b4b4b4">;</i></span>
<span class="a c" style="left:76px;top:1188.3px;color:#2b91af">296</span>
<span class="a c" style="left:76px;top:1229.1px;color:#2b91af">297</span>
<svg class="a" style="left:230.7px;top:1236.1px;" width="13.5" height="12" viewBox="0 0 13.5 12"><path d="M0 6H12.5M7 0.7L12.5 6L7 11.3" fill="none" stroke="#1b5964" stroke-width="1.9"/></svg>
<span class="a c" style="left:220.25px;top:1229.1px">  <i style="color:#4ec9b0">Int32</i><i style="color:#1b5964">·</i><i style="color:#9cdcfe">cpcnt</i><i style="color:#1b5964">·</i><i style="color:#b4b4b4">=</i><i style="color:#1b5964">·</i><i style="color:#b5cea8">4</i><i style="color:#1b5964">·</i><i style="color:#b4b4b4">*</i><i style="color:#1b5964">·</i><i style="color:#b4b4b4">(</i><i style="color:#9cdcfe">sub</i><i style="color:#1b5964">·</i><i style="color:#b4b4b4">+</i><i style="color:#1b5964">·</i><i style="color:#9cdcfe">rsub</i><i style="color:#b4b4b4">);</i></span>
<span class="a c" style="left:76px;top:1269.9px;color:#2b91af">298</span>
<svg class="a" style="left:230.7px;top:1276.9px;" width="13.5" height="12" viewBox="0 0 13.5 12"><path d="M0 6H12.5M7 0.7L12.5 6L7 11.3" fill="none" stroke="#1b5964" stroke-width="1.9"/></svg>
<span class="a c" style="left:220.25px;top:1269.9px">  <i style="color:#d8a0df">if</i><i style="color:#1b5964">·</i><i style="color:#b4b4b4">(</i><i style="color:#9cdcfe">cpcnt</i><i style="color:#1b5964">·</i><i style="color:#b4b4b4">&lt;=</i><i style="color:#1b5964">·</i><i style="color:#b5cea8">0</i><i style="color:#b4b4b4">)</i></span>
</div>
<div style="left:3162px;top:286px;width:38px;height:1286px;background:#3e3e42;"></div>
<div style="left:3200px;top:286px;width:2px;height:1322px;background:#3a3a3e;"></div>
<div style="left:3164px;top:286px;width:36px;height:42px;background:#1e1e1e;"></div>
<svg style="left:3170px;top:294px;" width="24" height="27" viewBox="0 0 24 27"><path d="M0 12H24M0 15.5H24" stroke="#f1f1f1" stroke-width="2"/><path d="M12 1V10M8 5L12 1L16 5M12 26V17M8 22L12 26L16 22" fill="none" stroke="#f1f1f1" stroke-width="2"/></svg>
<svg style="left:3172px;top:342px;" width="18" height="10" viewBox="0 0 18 10"><path d="M0 10H18L9 0Z" fill="#999999"/></svg>
<div style="left:3170px;top:877px;width:22px;height:83px;background:#686868;"></div>
<svg style="left:3172px;top:1550px;" width="18" height="10" viewBox="0 0 18 10"><path d="M0 0H18L9 10Z" fill="#999999"/></svg>
<div style="left:731px;top:1572px;width:2469px;height:36px;background:#3e3e42;"></div>
<div style="left:733px;top:1574px;width:116px;height:32px;background:#333337;"></div>
<span style="left:737px;top:1578px;letter-spacing:-2.01px;">120 %</span>
<svg style="left:833px;top:1586px;" width="12" height="6" viewBox="0 0 12 6"><path d="M0 0H12L6.0 6Z" fill="#f1f1f1"/></svg>
<svg style="left:897px;top:1576px;" width="26" height="26" viewBox="0 0 26 26"><circle cx="13" cy="13" r="12" fill="#1f9c3a" stroke="#f1f1f1" stroke-width="2"/><path d="M6.5 13.5L11 18L19.5 8.5" fill="none" stroke="#ffffff" stroke-width="3"/></svg>
<span style="left:931px;top:1578px;letter-spacing:-1.27px;">No issues found</span>
<svg style="left:1251px;top:1581px;" width="10" height="16" viewBox="0 0 10 16"><path d="M10 0V16L0 8Z" fill="#5a5a5e"/></svg>
<svg style="left:2785px;top:1581px;" width="10" height="16" viewBox="0 0 10 16"><path d="M0 0V16L10 8Z" fill="#5a5a5e"/></svg>
<span style="left:2851px;top:1579px;font-size:22px;color:#d0d0d0;letter-spacing:-0.63px;">Ln: 284</span>
<span style="left:2957px;top:1579px;font-size:22px;color:#d0d0d0;letter-spacing:-0.92px;">Ch: 1</span>
<span style="left:3044px;top:1579px;font-size:22px;color:#d0d0d0;letter-spacing:-1.96px;">TABS</span>
<span style="left:3132px;top:1579px;font-size:22px;color:#d0d0d0;letter-spacing:-2.61px;">CRLF</span>
<div style="left:3214px;top:242px;width:614px;height:1366px;background:#3f3f46;"></div>
<div style="left:3216px;top:244px;width:610px;height:1362px;background:#252526;"></div>
<div style="left:3216px;top:244px;width:610px;height:98px;background:#2d2d30;"></div>
<span style="left:3225px;top:256px;color:#d0d0d0;letter-spacing:-0.08px;">Diagnostic Tools</span>
<svg style="left:3414px;top:262px" width="296" height="10"><defs><pattern id="g3414262" width="8" height="8" patternUnits="userSpaceOnUse"><rect x="0" y="0" width="2" height="2" fill="#46464a"/><rect x="4" y="4" width="2" height="2" fill="#46464a"/></pattern></defs><rect width="296" height="10" fill="url(#g3414262)"/></svg>
<svg style="left:3726px;top:262px;" width="16" height="8" viewBox="0 0 16 8"><path d="M0 0H16L8 8Z" fill="#f1f1f1"/></svg>
<svg style="left:3761px;top:255px;" width="14" height="22" viewBox="0 0 14 22"><path d="M3 1H11V12M4 1V12M0 12H14M7 12V21" fill="none" stroke="#f1f1f1" stroke-width="2"/><rect x="8" y="1" width="3" height="11" fill="#f1f1f1"/></svg>
<svg style="left:3792px;top:258px;" width="20" height="16" viewBox="0 0 20 16"><path d="M1.5 0L18.5 16M18.5 0L1.5 16" stroke="#f1f1f1" stroke-width="3.2"/></svg>
<svg style="left:3235px;top:297px;" width="34" height="34" viewBox="0 0 34 34"><g transform="translate(17 17)"><g fill="#424245" stroke="#f1f1f1" stroke-width="2"><path d="M-3.5 -16H3.5L4.5 -11.5L7 -10.5L11 -13L15.5 -8.5L13 -4.5L14 -2L16 -1.5 16 3.5 11.5 4.5 10.5 7 13 11 8.5 15.5 4.5 13 2 14 1.5 16H-3.5L-4.5 11.5L-7 10.5L-11 13L-15.5 8.5L-13 4.5L-14 2L-16 1.5V-3.5L-11.5 -4.5L-10.5 -7L-13 -11L-8.5 -15.5L-4.5 -13L-2 -14Z"/><circle r="5"/></g></g></svg>
<div style="left:3288px;top:292px;width:2px;height:44px;background:#222224;"></div>
<svg style="left:3303px;top:297px;" width="34" height="34" viewBox="0 0 34 34"><path d="M24 8V1H1V32H24V25" fill="none" stroke="#f1f1f1" stroke-width="2"/><path d="M20 8V5H5V28H20V25" fill="none" stroke="#f1f1f1" stroke-width="2"/><path d="M9 12H21V6L33 16.5L21 27V21H9Z" fill="#0063b1" stroke="#f1f1f1" stroke-width="1.5"/></svg>
<div style="left:3356px;top:292px;width:2px;height:44px;background:#222224;"></div>
<svg style="left:3372px;top:299px;" width="32" height="32" viewBox="0 0 32 32"><circle cx="11" cy="11" r="9.5" fill="#e8e8e8" stroke="#f1f1f1" stroke-width="2"/><circle cx="11" cy="11" r="7.5" fill="#e8e8e8" stroke="#555" stroke-width="1"/><path d="M18 16L30 28L27 31L15 19Z" fill="#424245" stroke="#f1f1f1" stroke-width="2"/><path d="M6 11H16" stroke="#0063b1" stroke-width="2.5"/><path d="M11 6V16" stroke="#0063b1" stroke-width="2.5"/></svg>
<svg style="left:3424px;top:299px;" width="32" height="32" viewBox="0 0 32 32"><circle cx="11" cy="11" r="9.5" fill="#e8e8e8" stroke="#f1f1f1" stroke-width="2"/><circle cx="11" cy="11" r="7.5" fill="#e8e8e8" stroke="#555" stroke-width="1"/><path d="M18 16L30 28L27 31L15 19Z" fill="#424245" stroke="#f1f1f1" stroke-width="2"/><path d="M6 11H16" stroke="#0063b1" stroke-width="2.5"/></svg>
<svg style="left:3472px;top:298px;" width="32" height="32" viewBox="0 0 32 32"><g fill="#999" stroke="#f1f1f1" stroke-width="1.5"><rect x="4" y="16" width="6" height="15"/><rect x="10" y="8" width="7" height="23"/><rect x="17" y="12" width="6" height="19"/><rect x="23" y="18" width="6" height="13"/></g><path d="M3 7C3 1 12 1 12 6C12 9 8 9 8 13" fill="none" stroke="#f1f1f1" stroke-width="3"/></svg>
<span style="left:3237px;top:353px;font-size:23px;font-weight:700;letter-spacing:-0.55px;">Diagnostics session: 13:06 minutes</span>
<div style="left:3216px;top:385px;width:610px;height:2px;background:#464646;"></div>
<div style="left:3216px;top:429px;width:610px;height:2px;background:#464646;"></div>
<div style="left:3326px;top:387px;width:2px;height:42px;background:#3e3e42;"></div>
<div style="left:3578px;top:387px;width:2px;height:42px;background:#3e3e42;"></div>
<div style="left:3377px;top:421px;width:2px;height:8px;background:#3e3e42;"></div>
<div style="left:3427px;top:421px;width:2px;height:8px;background:#3e3e42;"></div>
<div style="left:3478px;top:421px;width:2px;height:8px;background:#3e3e42;"></div>
<div style="left:3528px;top:421px;width:2px;height:8px;background:#3e3e42;"></div>
<div style="left:3629px;top:421px;width:2px;height:8px;background:#3e3e42;"></div>
<div style="left:3679px;top:421px;width:2px;height:8px;background:#3e3e42;"></div>
<div style="left:3730px;top:421px;width:2px;height:8px;background:#3e3e42;"></div>
<div style="left:3280px;top:387px;width:10px;height:42px;background:#f0f0f0;"></div>
<div style="left:3752px;top:387px;width:10px;height:42px;background:#f0f0f0;"></div>
<span style="left:3332px;top:394px;font-size:21px;font-weight:700;color:#b0b0b0;letter-spacing:0.37px;">12:50min</span>
<span style="left:3584px;top:394px;font-size:21px;font-weight:700;color:#b0b0b0;letter-spacing:0.62px;">13:00min</span>
<svg style="left:3226px;top:443px;" width="18" height="18" viewBox="0 0 18 18"><path d="M17 1V17H1Z" fill="#c8c8c8" stroke="#1b1b1c" stroke-width="1.5"/></svg>
<span style="left:3251px;top:443px;font-size:23px;font-weight:700;letter-spacing:-1.07px;">Events</span>
<svg style="left:3252px;top:482px;" width="21" height="22" viewBox="0 0 21 22"><rect x="1" y="1" width="19" height="20" fill="none" stroke="#f1f1f1" stroke-width="2"/><rect x="9" y="1" width="3" height="20" fill="#f1f1f1"/></svg>
<div style="left:3288px;top:472px;width:462px;height:42px;background:#252526;border:2px solid #505050;"></div>
<div style="left:3290px;top:484px;width:454px;height:27px;background:#686868;"></div>
<div style="left:3326px;top:474px;width:2px;height:10px;background:#303032;"></div>
<div style="left:3578px;top:474px;width:2px;height:10px;background:#303032;"></div>
<svg style="left:3226px;top:532px;" width="18" height="18" viewBox="0 0 18 18"><path d="M17 1V17H1Z" fill="#c8c8c8" stroke="#1b1b1c" stroke-width="1.5"/></svg>
<span style="left:3251px;top:532px;font-size:23px;font-weight:700;letter-spacing:-0.44px;">Process Memory (GB)</span>
<svg style="left:3524px;top:531px;" width="24" height="20" viewBox="0 0 24 20"><path d="M0 0H24L12 20Z" fill="#3399ff"/></svg>
<span style="left:3552px;top:531px;letter-spacing:-2.00px;">S...</span>
<div style="left:3598px;top:530px;width:25px;height:25px;border-radius:13px;background:#71b0cf"></div>
<span style="left:3627px;top:531px;letter-spacing:-0.51px;">Priv...</span>
<div style="left:3288px;top:566px;width:462px;height:136px;background:#252526;border:2px solid #505050;"></div>
<svg style="left:3290px;top:568px;" width="463" height="136" viewBox="0 0 463 136"><path d="M0 136V16H290L330 14.5H380L400 12.5L440 11H456V136Z" fill="#587e91"/><path d="M0 16H290L330 14.5H380L400 12.5L440 11H456" fill="none" stroke="#6aa3bd" stroke-width="2"/><rect x="36" y="0" width="2" height="136" fill="#000" opacity="0.08"/><rect x="288" y="0" width="2" height="136" fill="#000" opacity="0.08"/></svg>
<span style="left:3247px;top:573px;letter-spacing:-1.12px;">6,3</span>
<span style="left:3764px;top:573px;letter-spacing:-1.12px;">6,3</span>
<span style="left:3265px;top:680px;">0</span>
<span style="left:3764px;top:680px;">0</span>
<svg style="left:3226px;top:717px;" width="18" height="18" viewBox="0 0 18 18"><path d="M17 1V17H1Z" fill="#c8c8c8" stroke="#1b1b1c" stroke-width="1.5"/></svg>
<span style="left:3251px;top:717px;font-size:23px;font-weight:700;letter-spacing:-0.45px;">CPU (% of all processors)</span>
<div style="left:3288px;top:746px;width:462px;height:136px;background:#252526;border:2px solid #505050;"></div>
<svg style="left:3290px;top:748px;" width="463" height="136" viewBox="0 0 463 136"><rect x="36" y="0" width="2" height="136" fill="#303032"/><rect x="288" y="0" width="2" height="136" fill="#303032"/><path d="M0 136V134H50L58 132L66 134H85L93 132.5L101 134H118L125 130L133 134H150L158 130.5L166 134H185L192 132.5L199 134H220L229 130L238 134H265L273 132.5L281 134H310L320 129L330 134H350L362 130L370 132L380 126L392 132L405 129L418 133L428 132L440 134H456V136Z" fill="#5b8ba3"/></svg>
<span style="left:3241px;top:752px;letter-spacing:-1.02px;">100</span>
<span style="left:3765px;top:752px;letter-spacing:-1.02px;">100</span>
<span style="left:3265px;top:860px;">0</span>
<span style="left:3764px;top:860px;">0</span>
<div style="left:3216px;top:924px;width:610px;height:6px;background:#3e3e42;"></div>
<div style="left:3223px;top:938px;width:126px;height:39px;background:#3e3e42;"></div>
<div style="left:3216px;top:977px;width:610px;height:5px;background:#3e3e42;"></div>
<span style="left:3237px;top:949px;letter-spacing:-0.38px;">Summary</span>
<span style="left:3362px;top:949px;letter-spacing:-0.90px;">Events</span>
<span style="left:3455px;top:949px;letter-spacing:-0.23px;">Memory Usage</span>
<span style="left:3640px;top:949px;letter-spacing:-1.30px;">CPU Usage</span>
<span style="left:3235px;top:996px;font-size:23px;font-weight:700;letter-spacing:-1.07px;">Events</span>
<div style="left:3216px;top:1027px;width:610px;height:2px;background:#3e3e42;"></div>
<svg style="left:3246px;top:1044px;" width="27" height="22" viewBox="0 0 27 22"><g fill="none" stroke="#f1f1f1" stroke-width="2"><path d="M1 11L7 5L13 11L7 17Z"/><path d="M8 11L14 5L20 11L14 17Z"/><path d="M15 11L21 5L26 11L21 17Z"/></g></svg>
<span style="left:3289px;top:1046px;letter-spacing:-0.49px;">Show Events (1 of 1)</span>
<div style="left:3216px;top:1084px;width:610px;height:2px;background:#3e3e42;"></div>
<span style="left:3235px;top:1099px;font-size:23px;font-weight:700;letter-spacing:0.03px;">Memory Usage</span>
<div style="left:3216px;top:1130px;width:610px;height:2px;background:#3e3e42;"></div>
<svg style="left:3246px;top:1150px;" width="27" height="22" viewBox="0 0 27 22"><path d="M1 4H8L9 1H18L19 4H26V21H1Z" fill="none" stroke="#c8c8c8" stroke-width="2"/><circle cx="14" cy="12" r="4.5" fill="none" stroke="#c8c8c8" stroke-width="2"/><rect x="4" y="7" width="3" height="2" fill="#c8c8c8"/></svg>
<span style="left:3289px;top:1150px;color:#656565;letter-spacing:-0.44px;">Take Snapshot</span>
<svg style="left:3246px;top:1203px;" width="27" height="25" viewBox="0 0 27 25"><rect x="1" y="4" width="25" height="17" fill="none" stroke="#f1f1f1" stroke-width="2"/><rect x="6" y="9" width="15" height="7" fill="none" stroke="#f1f1f1" stroke-width="2"/><path d="M5 0V4M9 0V4M13 0V4M17 0V4M21 0V4M5 21V25M9 21V25M13 21V25M17 21V25M21 21V25" stroke="#f1f1f1" stroke-width="2"/></svg>
<span style="left:3289px;top:1206px;letter-spacing:-0.09px;">Enable heap profiling (affects performance)</span>
<div style="left:3216px;top:1244px;width:610px;height:2px;background:#3e3e42;"></div>
<span style="left:3235px;top:1259px;font-size:23px;font-weight:700;letter-spacing:-0.66px;">CPU Usage</span>
<div style="left:3216px;top:1290px;width:610px;height:2px;background:#3e3e42;"></div>
<div style="left:3249px;top:1309px;width:17px;height:17px;border-radius:11px;background:#46464a;border:2px solid #f1f1f1"></div>
<span style="left:3289px;top:1309px;letter-spacing:-0.58px;">Record CPU Profile</span>
<div style="left:730px;top:1621px;width:1537px;height:343px;background:#3f3f46;"></div>
<div style="left:732px;top:1623px;width:1533px;height:339px;background:#252526;"></div>
<div style="left:732px;top:1623px;width:1533px;height:94px;background:#2d2d30;"></div>
<span style="left:740px;top:1634px;color:#d0d0d0;letter-spacing:-0.28px;">Autos</span>
<svg style="left:816px;top:1639px" width="1334" height="10"><defs><pattern id="g8161639" width="8" height="8" patternUnits="userSpaceOnUse"><rect x="0" y="0" width="2" height="2" fill="#46464a"/><rect x="4" y="4" width="2" height="2" fill="#46464a"/></pattern></defs><rect width="1334" height="10" fill="url(#g8161639)"/></svg>
<svg style="left:2165px;top:1640px;" width="16" height="8" viewBox="0 0 16 8"><path d="M0 0H16L8 8Z" fill="#f1f1f1"/></svg>
<svg style="left:2200px;top:1633px;" width="14" height="22" viewBox="0 0 14 22"><path d="M3 1H11V12M4 1V12M0 12H14M7 12V21" fill="none" stroke="#f1f1f1" stroke-width="2"/><rect x="8" y="1" width="3" height="11" fill="#f1f1f1"/></svg>
<svg style="left:2232px;top:1636px;" width="20" height="16" viewBox="0 0 20 16"><path d="M1.5 0L18.5 16M18.5 0L1.5 16" stroke="#f1f1f1" stroke-width="3.2"/></svg>
<div style="left:733px;top:1669px;width:448px;height:42px;background:#3f3f46;"></div>
<div style="left:735px;top:1671px;width:422px;height:38px;background:#333337;"></div>
<div style="left:1157px;top:1671px;width:24px;height:38px;background:#3e3e42;"></div>
<span style="left:742px;top:1680px;color:#999999;letter-spacing:-0.67px;">Search (Ctrl+E)</span>
<svg style="left:1125px;top:1678px;" width="27" height="27" viewBox="0 0 27 27"><circle cx="18" cy="9" r="6.5" fill="none" stroke="#f1f1f1" stroke-width="3.5"/><path d="M13.5 13.5L3 24" stroke="#f1f1f1" stroke-width="4.5" stroke-linecap="round"/></svg>
<svg style="left:1163px;top:1687px;" width="12" height="6" viewBox="0 0 12 6"><path d="M0 0H12L6.0 6Z" fill="#f1f1f1"/></svg>
<svg style="left:1198px;top:1680px;" width="28" height="23" viewBox="0 0 28 23"><path d="M28 11.5H3M12 2L2.5 11.5L12 21" fill="none" stroke="#5a5a5e" stroke-width="3"/></svg>
<svg style="left:1241px;top:1680px;" width="28" height="23" viewBox="0 0 28 23"><path d="M0 11.5H25M16 2L25.5 11.5L16 21" fill="none" stroke="#5a5a5e" stroke-width="3"/></svg>
<span style="left:1284px;top:1681px;letter-spacing:-0.42px;">Search Depth:</span>
<div style="left:1445px;top:1673px;width:75px;height:34px;background:#333337;border:2px solid #434346;"></div>
<span style="left:1453px;top:1681px;">3</span>
<svg style="left:1504px;top:1689px;" width="12" height="6" viewBox="0 0 12 6"><path d="M0 0H12L6.0 6Z" fill="#999999"/></svg>
<div style="left:1537px;top:1674px;width:2px;height:34px;background:#222224;"></div>
<div style="left:1539px;top:1674px;width:2px;height:34px;background:#46464a;"></div>
<svg style="left:1555px;top:1677px;" width="27" height="30" viewBox="0 0 27 30"><path d="M9 0H26L19 9V18L15 21V9Z" fill="#c8c8c8"/><path d="M2 4H10V14M3 4V14M0 14H12M6 14V29" fill="none" stroke="#c8c8c8" stroke-width="2"/></svg>
<div style="left:1590px;top:1670px;width:40px;height:39px;background:#2d2d30;border:2px solid #3399ff;"></div>
<svg style="left:1599px;top:1678px;" width="26" height="27" viewBox="0 0 26 27"><rect x="3" y="1" width="7" height="9" fill="none" stroke="#c8c8c8" stroke-width="2"/><path d="M6 10V25H24V12H12" fill="none" stroke="#c8c8c8" stroke-width="2"/><path d="M1 14H11" stroke="#c8c8c8" stroke-width="2"/></svg>
<span style="left:1610px;top:1689px;font-size:13px;color:#c8c8c8;">ab</span>
<div style="left:733px;top:1719px;width:1497px;height:35px;background:#252526;"></div>
<div style="left:733px;top:1753px;width:1497px;height:2px;background:#3e3e42;"></div>
<div style="left:747px;top:1719px;width:2px;height:35px;background:#3e3e42;"></div>
<div style="left:1241px;top:1719px;width:2px;height:35px;background:#3e3e42;"></div>
<div style="left:1982px;top:1719px;width:2px;height:35px;background:#3e3e42;"></div>
<span style="left:753px;top:1727px;">Name</span>
<span style="left:1247px;top:1727px;letter-spacing:0.08px;">Value</span>
<span style="left:1990px;top:1727px;letter-spacing:-0.26px;">Type</span>
<div style="left:785px;top:1755px;width:1445px;height:37px;background:#3f3f46;"></div>
<div style="left:748px;top:1790px;width:1482px;height:2px;background:#0e0e0e;"></div>
<div style="left:1241px;top:1755px;width:2px;height:37px;background:#0e0e0e;"></div>
<div style="left:1982px;top:1755px;width:2px;height:37px;background:#0e0e0e;"></div>
<svg style="left:761px;top:1767px;" width="9" height="17" viewBox="0 0 9 17"><path d="M1 1.5L7.5 8.5L1 15.5Z" fill="none" stroke="#c8c8c8" stroke-width="1.6"/></svg>
<svg style="left:788px;top:1763px;" width="21" height="19" viewBox="0 0 21 19"><path d="M12 0L20.4 4.7V12.8L8.5 18.3L0 13.4V6.6Z" fill="#75beff"/><path d="M5 6.4L12 2.7L15.5 4.7L8.5 8.2Z" fill="#2a3a4a"/></svg>
<span style="left:822px;top:1764px;letter-spacing:0.57px;">data</span>
<span style="left:1246px;top:1764px;letter-spacing:0.64px;">0x0000000000000000 &lt;NULL&gt;</span>
<span style="left:1989px;top:1764px;letter-spacing:0.41px;">BaseContainer *</span>
<div style="left:748px;top:1828px;width:1482px;height:2px;background:#0e0e0e;"></div>
<div style="left:1241px;top:1792px;width:2px;height:37px;background:#0e0e0e;"></div>
<div style="left:1982px;top:1792px;width:2px;height:37px;background:#0e0e0e;"></div>
<svg style="left:788px;top:1801px;" width="21" height="19" viewBox="0 0 21 19"><path d="M12 0L20.4 4.7V12.8L8.5 18.3L0 13.4V6.6Z" fill="#75beff"/><path d="M5 6.4L12 2.7L15.5 4.7L8.5 8.2Z" fill="#2a3a4a"/></svg>
<span style="left:822px;top:1802px;letter-spacing:1.33px;">dirty</span>
<span style="left:1246px;top:1802px;letter-spacing:1.16px;">true</span>
<span style="left:1989px;top:1802px;letter-spacing:1.16px;">bool</span>
<div style="left:748px;top:1865px;width:1482px;height:2px;background:#0e0e0e;"></div>
<div style="left:1241px;top:1829px;width:2px;height:37px;background:#0e0e0e;"></div>
<div style="left:1982px;top:1829px;width:2px;height:37px;background:#0e0e0e;"></div>
<svg style="left:761px;top:1842px;" width="9" height="17" viewBox="0 0 9 17"><path d="M1 1.5L7.5 8.5L1 15.5Z" fill="none" stroke="#c8c8c8" stroke-width="1.6"/></svg>
<svg style="left:788px;top:1838px;" width="21" height="19" viewBox="0 0 21 19"><path d="M12 0L20.4 4.7V12.8L8.5 18.3L0 13.4V6.6Z" fill="#75beff"/><path d="M5 6.4L12 2.7L15.5 4.7L8.5 8.2Z" fill="#2a3a4a"/></svg>
<span style="left:822px;top:1839px;letter-spacing:1.65px;">op</span>
<span style="left:1246px;top:1839px;letter-spacing:0.38px;">0x000001f64ba38700 {...}</span>
<span style="left:1989px;top:1839px;letter-spacing:0.41px;">BaseObject *</span>
<div style="left:748px;top:1902px;width:1482px;height:2px;background:#0e0e0e;"></div>
<div style="left:1241px;top:1866px;width:2px;height:37px;background:#0e0e0e;"></div>
<div style="left:1982px;top:1866px;width:2px;height:37px;background:#0e0e0e;"></div>
<svg style="left:761px;top:1879px;" width="9" height="17" viewBox="0 0 9 17"><path d="M1 1.5L7.5 8.5L1 15.5Z" fill="none" stroke="#c8c8c8" stroke-width="1.6"/></svg>
<svg style="left:788px;top:1875px;" width="21" height="19" viewBox="0 0 21 19"><path d="M12 0L20.4 4.7V12.8L8.5 18.3L0 13.4V6.6Z" fill="#75beff"/><path d="M5 6.4L12 2.7L15.5 4.7L8.5 8.2Z" fill="#2a3a4a"/></svg>
<span style="left:822px;top:1876px;letter-spacing:0.66px;">this</span>
<span style="left:1246px;top:1876px;letter-spacing:0.55px;">0x000001f769d06a40 {test={...} }</span>
<span style="left:1989px;top:1876px;letter-spacing:0.83px;">RoundedTube *</span>
<div style="left:2231px;top:1719px;width:34px;height:243px;background:#3e3e42;"></div>
<svg style="left:2239px;top:1731px;" width="18" height="10" viewBox="0 0 18 10"><path d="M0 10H18L9 0Z" fill="#55555a"/></svg>
<svg style="left:2239px;top:1940px;" width="18" height="10" viewBox="0 0 18 10"><path d="M0 0H18L9 10Z" fill="#55555a"/></svg>
<div style="left:730px;top:1962px;width:84px;height:42px;background:#3f3f46;"></div>
<div style="left:732px;top:1962px;width:80px;height:40px;background:#2d2d30;"></div>
<span style="left:741px;top:1972px;color:#0097fb;letter-spacing:-0.28px;">Autos</span>
<span style="left:827px;top:1972px;color:#d0d0d0;letter-spacing:-1.06px;">Locals</span>
<span style="left:915px;top:1972px;color:#d0d0d0;letter-spacing:-0.72px;">Threads</span>
<span style="left:1023px;top:1972px;color:#d0d0d0;letter-spacing:0.04px;">Modules</span>
<span style="left:1139px;top:1972px;color:#d0d0d0;letter-spacing:-0.31px;">Watch 1</span>
<div style="left:2280px;top:1621px;width:1548px;height:343px;background:#3f3f46;"></div>
<div style="left:2282px;top:1623px;width:1544px;height:339px;background:#252526;"></div>
<div style="left:2282px;top:1623px;width:1544px;height:44px;background:#2d2d30;"></div>
<span style="left:2290px;top:1634px;color:#d0d0d0;letter-spacing:-0.90px;">Call Stack</span>
<svg style="left:2405px;top:1639px" width="1306" height="10"><defs><pattern id="g24051639" width="8" height="8" patternUnits="userSpaceOnUse"><rect x="0" y="0" width="2" height="2" fill="#46464a"/><rect x="4" y="4" width="2" height="2" fill="#46464a"/></pattern></defs><rect width="1306" height="10" fill="url(#g24051639)"/></svg>
<svg style="left:3727px;top:1640px;" width="16" height="8" viewBox="0 0 16 8"><path d="M0 0H16L8 8Z" fill="#f1f1f1"/></svg>
<svg style="left:3761px;top:1633px;" width="14" height="22" viewBox="0 0 14 22"><path d="M3 1H11V12M4 1V12M0 12H14M7 12V21" fill="none" stroke="#f1f1f1" stroke-width="2"/><rect x="8" y="1" width="3" height="11" fill="#f1f1f1"/></svg>
<svg style="left:3795px;top:1636px;" width="20" height="16" viewBox="0 0 20 16"><path d="M1.5 0L18.5 16M18.5 0L1.5 16" stroke="#f1f1f1" stroke-width="3.2"/></svg>
<div style="left:2282px;top:1667px;width:1511px;height:35px;background:#252526;"></div>
<div style="left:2282px;top:1701px;width:1511px;height:2px;background:#3e3e42;"></div>
<div style="left:2313px;top:1667px;width:2px;height:35px;background:#3e3e42;"></div>
<div style="left:3733px;top:1667px;width:2px;height:35px;background:#3e3e42;"></div>
<span style="left:2320px;top:1674px;letter-spacing:-0.26px;">Name</span>
<div style="left:3740px;top:1667px;width:53px;height:35px;overflow:hidden"><span class="a" style="left:0;top:7px">Langu</span></div>
<div style="left:2315px;top:1704px;width:1478px;height:37px;background:#3f3f46;"></div>
<div style="left:2282px;top:1739px;width:1511px;height:2px;background:#0e0e0e;"></div>
<div style="left:2313px;top:1704px;width:2px;height:37px;background:#0e0e0e;"></div>
<div style="left:3733px;top:1704px;width:2px;height:37px;background:#0e0e0e;"></div>
<span style="left:2319px;top:1712px;letter-spacing:0.65px;">example.main.xdl64!RoundedTube::GetVirtualObjects Line 284</span>
<span style="left:3739px;top:1712px;letter-spacing:1.21px;">C++</span>
<div style="left:2282px;top:1776px;width:1511px;height:2px;background:#0e0e0e;"></div>
<div style="left:2313px;top:1741px;width:2px;height:37px;background:#0e0e0e;"></div>
<div style="left:3733px;top:1741px;width:2px;height:37px;background:#0e0e0e;"></div>
<span style="left:2319px;top:1749px;color:#999999;letter-spacing:0.57px;">c4d_base.xdl64!00007ffffeab8789</span>
<span style="left:3739px;top:1749px;color:#999999;letter-spacing:-0.54px;">Un...</span>
<div style="left:2282px;top:1813px;width:1511px;height:2px;background:#0e0e0e;"></div>
<div style="left:2313px;top:1778px;width:2px;height:37px;background:#0e0e0e;"></div>
<div style="left:3733px;top:1778px;width:2px;height:37px;background:#0e0e0e;"></div>
<span style="left:2319px;top:1786px;color:#999999;letter-spacing:0.54px;">c4d_base.xdl64!00007ffffe39e871</span>
<span style="left:3739px;top:1786px;color:#999999;letter-spacing:-0.54px;">Un...</span>
<div style="left:2282px;top:1850px;width:1511px;height:2px;background:#0e0e0e;"></div>
<div style="left:2313px;top:1815px;width:2px;height:37px;background:#0e0e0e;"></div>
<div style="left:3733px;top:1815px;width:2px;height:37px;background:#0e0e0e;"></div>
<span style="left:2319px;top:1823px;color:#999999;letter-spacing:0.60px;">c4d_base.xdl64!00007ffffe532be0</span>
<span style="left:3739px;top:1823px;color:#999999;letter-spacing:-0.54px;">Un...</span>
<div style="left:2282px;top:1887px;width:1511px;height:2px;background:#0e0e0e;"></div>
<div style="left:2313px;top:1852px;width:2px;height:37px;background:#0e0e0e;"></div>
<div style="left:3733px;top:1852px;width:2px;height:37px;background:#0e0e0e;"></div>
<span style="left:2319px;top:1860px;color:#999999;letter-spacing:0.57px;">c4d_base.xdl64!00007ffffe53467d</span>
<span style="left:3739px;top:1860px;color:#999999;letter-spacing:-0.54px;">Un...</span>
<div style="left:2282px;top:1924px;width:1511px;height:2px;background:#0e0e0e;"></div>
<div style="left:2313px;top:1889px;width:2px;height:37px;background:#0e0e0e;"></div>
<div style="left:3733px;top:1889px;width:2px;height:37px;background:#0e0e0e;"></div>
<span style="left:2319px;top:1898px;color:#999999;letter-spacing:0.58px;">c4d_base.xdl64!00007ffffeabcb26</span>
<span style="left:3739px;top:1898px;color:#999999;letter-spacing:-0.54px;">Un...</span>
<div style="left:2313px;top:1926px;width:2px;height:36px;background:#0e0e0e;"></div>
<div style="left:3733px;top:1926px;width:2px;height:36px;background:#0e0e0e;"></div>
<span style="left:2319px;top:1935px;color:#999999;letter-spacing:0.54px;">c4d_base.xdl64!00007ffffeabd9a2</span>
<span style="left:3739px;top:1935px;color:#999999;letter-spacing:-0.54px;">Un...</span>
<svg style="left:2285px;top:1709px;" width="25" height="25" viewBox="0 0 25 25"><circle cx="12.5" cy="12.5" r="12" fill="#f44e42"/><path d="M3.5 8.5H11.5V3.5L22.5 12.5L11.5 21.5V16.5H3.5Z" fill="#ffcc20" stroke="#c8c8c8" stroke-width="1.5"/></svg>
<div style="left:3793px;top:1667px;width:33px;height:295px;background:#3e3e42;"></div>
<svg style="left:3801px;top:1680px;" width="18" height="10" viewBox="0 0 18 10"><path d="M0 10H18L9 0Z" fill="#999999"/></svg>
<div style="left:3801px;top:1699px;width:18px;height:95px;background:#686868;"></div>
<svg style="left:3801px;top:1939px;" width="18" height="10" viewBox="0 0 18 10"><path d="M0 0H18L9 10Z" fill="#999999"/></svg>
<div style="left:2280px;top:1962px;width:125px;height:42px;background:#3f3f46;"></div>
<div style="left:2282px;top:1962px;width:121px;height:40px;background:#2d2d30;"></div>
<span style="left:2292px;top:1972px;color:#0097fb;letter-spacing:-0.90px;">Call Stack</span>
<span style="left:2417px;top:1972px;color:#d0d0d0;letter-spacing:-0.34px;">Breakpoints</span>
<span style="left:2566px;top:1972px;color:#d0d0d0;letter-spacing:-0.27px;">Exception Settings</span>
<span style="left:2786px;top:1972px;color:#d0d0d0;letter-spacing:0.49px;">Output</span>
<div style="left:0px;top:2016px;width:3840px;height:48px;background:#ca5100;"></div>
<div style="left:0px;top:2064px;width:3840px;height:2px;background:#46464a;"></div>
<div style="left:0px;top:2066px;width:3840px;height:11px;background:#1b1b1b;"></div>
<div style="left:1838px;top:2072px;width:76px;height:10px;border:2px solid #2e2e2e;border-radius:8px;background:#202020"></div>
<svg style="left:9px;top:2031px;" width="31" height="21" viewBox="0 0 31 21"><path d="M6 1H30L25 20H1Z" fill="none" stroke="#ffffff" stroke-width="2"/></svg>
<span style="left:57px;top:2030px;color:#ffffff;letter-spacing:-1.27px;">Ready</span>
<svg style="left:3419px;top:2030px;" width="20" height="22" viewBox="0 0 20 22"><path d="M10 22V3M1.5 11L10 2.5L18.5 11" fill="none" stroke="#ffffff" stroke-width="3.5"/></svg>
<span style="left:3457px;top:2030px;color:#ffffff;">Add to Source Control</span>
<svg style="left:3707px;top:2037px;" width="15" height="8" viewBox="0 0 15 8"><path d="M0 8H15L7.5 0Z" fill="#ffffff"/></svg>
<svg style="left:3763px;top:2026px;" width="44" height="36" viewBox="0 0 44 36"><path d="M14 2C20 2 23 7 23 13V20L27 25H1L5 20V13C5 7 8 2 14 2Z" fill="#e8b08c"/><path d="M10 27H18C18 31 10 31 10 27Z" fill="#e8b08c"/><circle cx="30" cy="22" r="11" fill="#ffffff"/></svg>
<span style="left:3788px;top:2041px;font-size:19px;color:#1e1e1e;">1</span>
</body></html>
